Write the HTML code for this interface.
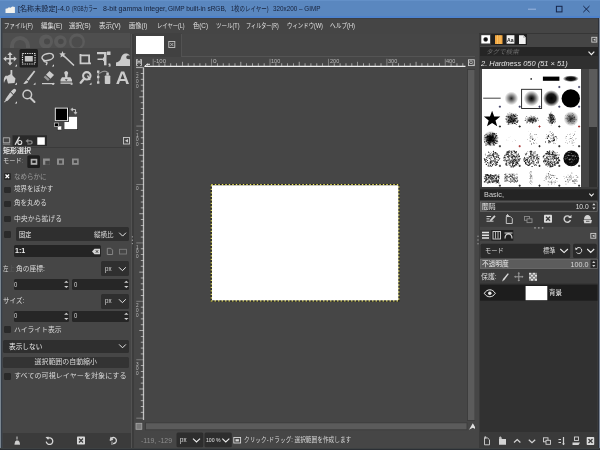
<!DOCTYPE html>
<html lang="ja">
<head>
<meta charset="utf-8">
<title>GIMP</title>
<style>
*{box-sizing:border-box;margin:0;padding:0}
html,body{width:600px;height:450px;overflow:hidden;background:#454545}
body{position:relative;font-family:"Liberation Sans","Noto Sans CJK JP",sans-serif;font-size:7px;color:#d8d8d8}
.a{position:absolute}
.t{position:absolute;white-space:nowrap;line-height:10px;height:10px}
.dk{position:absolute;background:#2f2f2f;border-radius:1.5px}
.cb{position:absolute;width:6.600px;height:6.600px;background:#2a2a2a;border-radius:1.2px}
svg{position:absolute;overflow:visible}
</style>
</head>
<body>
<div id="root" style="position:absolute;left:0;top:0;width:600px;height:450px;will-change:transform">
<div class="a" style="left:0;top:0;width:600px;height:18px;background:#5a87bf"></div>
<div class="a" style="left:0;top:0;width:600px;height:1px;background:#6390c8"></div>
<div class="a" style="left:0;top:16px;width:600px;height:2px;background:#4e82cb"></div>
<svg style="left:4.500px;top:6px" width="11" height="8" viewBox="0 0 11 8"><path d="M0.5 2.800 L2.800 2.300 L3.800 1.200 L5.500 1.800 L7.300 0.500 L9.900 0.900 L9.900 7 L0.5 7Z" fill="#f2f2ee"/></svg>
<div class="t" style="left:17.60px;top:4.30px;font-size:7.2px;color:#16213a;transform:scaleX(0.9899);transform-origin:0 50%;">[名称未設定]-4.0</div>
<div class="t" style="left:72.20px;top:4.30px;font-size:7.2px;color:#16213a;transform:scaleX(0.6448);transform-origin:0 50%;">(RGBカラー</div>
<div class="t" style="left:103.40px;top:4.30px;font-size:7.2px;color:#16213a;transform:scaleX(0.9766);transform-origin:0 50%;">8-bit gamma integer,</div>
<div class="t" style="left:168.40px;top:4.30px;font-size:7.2px;color:#16213a;transform:scaleX(0.9074);transform-origin:0 50%;">GIMP built-in sRGB,</div>
<div class="t" style="left:230.70px;top:4.30px;font-size:7.2px;color:#16213a;transform:scaleX(0.7645);transform-origin:0 50%;">1枚のレイヤー)</div>
<div class="t" style="left:273.00px;top:4.30px;font-size:7.2px;color:#16213a;transform:scaleX(0.8785);transform-origin:0 50%;">320x200 – GIMP</div>
<svg style="left:526px;top:3px" width="70" height="12" viewBox="0 0 70 12"><path d="M2 6.2h8" stroke="#9ab6de" stroke-width="1"/><rect x="30.4" y="3.3" width="5.600" height="5.600" fill="none" stroke="#15254a" stroke-width="1"/><path d="M57.3 3l6.200 6.200M63.500 3l-6.200 6.200" stroke="#15254a" stroke-width="1"/></svg>
<div class="a" style="left:1px;top:18px;width:598px;height:16px;background:#454545"></div>
<div class="a" style="left:0;top:18px;width:600px;height:1px;background:#3c3e44"></div>
<div class="t" style="left:4.20px;top:20.80px;font-size:6.6px;color:#e0e0e0;transform:scaleX(0.8277);transform-origin:0 50%;">ファイル(F)</div>
<div class="t" style="left:40.50px;top:20.80px;font-size:6.6px;color:#e0e0e0;transform:scaleX(0.9689);transform-origin:0 50%;">編集(E)</div>
<div class="t" style="left:69.40px;top:20.80px;font-size:6.6px;color:#e0e0e0;transform:scaleX(0.9916);transform-origin:0 50%;">選択(S)</div>
<div class="t" style="left:98.60px;top:20.80px;font-size:6.6px;color:#e0e0e0;transform:scaleX(0.9916);transform-origin:0 50%;">表示(V)</div>
<div class="t" style="left:128.90px;top:20.80px;font-size:6.6px;color:#e0e0e0;transform:scaleX(0.9474);transform-origin:0 50%;">画像(I)</div>
<div class="t" style="left:157.00px;top:20.80px;font-size:6.6px;color:#e0e0e0;transform:scaleX(0.8058);transform-origin:0 50%;">レイヤー(L)</div>
<div class="t" style="left:192.50px;top:20.80px;font-size:6.6px;color:#e0e0e0;transform:scaleX(0.9524);transform-origin:0 50%;">色(C)</div>
<div class="t" style="left:215.70px;top:20.80px;font-size:6.6px;color:#e0e0e0;transform:scaleX(0.8332);transform-origin:0 50%;">ツール(T)</div>
<div class="t" style="left:246.30px;top:20.80px;font-size:6.6px;color:#e0e0e0;transform:scaleX(0.7762);transform-origin:0 50%;">フィルター(R)</div>
<div class="t" style="left:286.60px;top:20.80px;font-size:6.6px;color:#e0e0e0;transform:scaleX(0.8212);transform-origin:0 50%;">ウィンドウ(W)</div>
<div class="t" style="left:330.00px;top:20.80px;font-size:6.6px;color:#e0e0e0;transform:scaleX(0.8639);transform-origin:0 50%;">ヘルプ(H)</div>
<div class="a" style="left:1px;top:34px;width:129.500px;height:414px;background:#464646"></div>
<div class="a" style="left:1.500px;top:33px;width:128px;height:15px;background:#4e4e4e"></div>
<svg style="left:0;top:0" width="600" height="450" viewBox="0 0 600 450">
<defs><clipPath id="wb"><rect x="1.500" y="33" width="128" height="15"/></clipPath></defs><g clip-path="url(#wb)">
<g fill="none" stroke="#5b5b5b" stroke-width="4"><path d="M12 48v-2a8 8 0 0 1 16 0v2"/></g>
<g fill="#5b5b5b"><circle cx="46" cy="41.500" r="7"/><circle cx="60.300" cy="41.500" r="6.300"/><circle cx="77" cy="41.500" r="8"/></g>
<g fill="#494949"><circle cx="47" cy="41.500" r="3"/><circle cx="60.800" cy="41.500" r="2.800"/><circle cx="77" cy="42" r="5.500" fill="#4c4c4c"/></g></g>
<rect x="19.5" y="49" width="18.5" height="18.5" rx="1.5" fill="#1f1f1f"/>
<g fill="#cbcbcb"><path d="M10 52l2.6 3h-1.8v3h3v-1.8l3 2.6-3 2.6v-1.8h-3v3h1.8l-2.6 3-2.6-3h1.8v-3h-3v1.8l-3-2.6 3-2.6v1.800h3v-3h-1.800z"/></g>
<rect x="22.5" y="53.5" width="12.5" height="10.5" fill="none" stroke="#e4e4e4" stroke-width="1.2" stroke-dasharray="1.3 1"/>
<rect x="24.8" y="56" width="8" height="5.5" fill="#c4c4c4"/>
<g fill="none" stroke="#cbcbcb" stroke-width="1.5"><ellipse cx="47.7" cy="57" rx="5.8" ry="3.4" transform="rotate(-12 47.7 57)"/><path d="M43.5 59.5c-.5 2 1.500 2.500 2.500 2.500s1.500 1.500 0 3"/></g>
<g stroke="#cbcbcb" stroke-width="1.7" stroke-linecap="round"><path d="M64 56l9.500 9"/></g><path d="M62.500 51l.9 2.200 2.300.3-1.700 1.600.5 2.400-2-1.200-2.100 1.200.5-2.400-1.700-1.600 2.400-.3z" fill="#cbcbcb"/>
<g fill="none" stroke="#cbcbcb" stroke-width="1.8"><path d="M80.500 54v9.300h10.500M79.500 55.300h9.600v9"/></g>
<g fill="#cbcbcb"><rect x="97" y="52" width="8.500" height="2.200"/><rect x="107" y="51.500" width="3.500" height="3.500"/><path d="M104 52h2.500v13.300h-2.500z"/><path d="M97.500 58.500h5.500v-1.500l2.500 2.300-2.500 2.300v-1.500h-5.500z"/><rect x="108.500" y="63.500" width="1.800" height="1.800"/></g>
<path d="M116 66v-3.500c2.500-.5 4.500-2 5-4.500.6-3 3.200-5.200 6-4.400 1.600.4 2.300 1.300 2.800 2.300-1.500-.6-3.200-.3-3.500 1.100-.3 1.700 1.400 2.500 3.700 2.200v6.800z" fill="#cbcbcb"/>
<path d="M17.0 66.5l0-2.200-2.200 2.200z" fill="#d8d8d8"/>
<path d="M54.0 66.5l0-2.200-2.200 2.200z" fill="#d8d8d8"/>
<path d="M110.5 66.5l0-2.200-2.200 2.200z" fill="#d8d8d8"/>
<path d="M17.0 84.8l0-2.200-2.200 2.200z" fill="#d8d8d8"/>
<path d="M35.5 84.8l0-2.200-2.200 2.200z" fill="#d8d8d8"/>
<path d="M54.0 84.8l0-2.200-2.200 2.200z" fill="#d8d8d8"/>
<path d="M72.5 84.8l0-2.200-2.200 2.200z" fill="#d8d8d8"/>
<path d="M91.5 84.8l0-2.200-2.200 2.200z" fill="#d8d8d8"/>
<path d="M17.0 103.5l0-2.200-2.200 2.200z" fill="#d8d8d8"/>
<g fill="#cbcbcb"><path d="M10.500 70h1.800v6h-1.800z"/><path d="M6 76.500l5-2.500 4.500 4.500-1 4.500-6.500.5z"/><path d="M6.500 75.500c-2.500.5-3 4-2.500 7.500.8-2.500 1.500-4 3.500-5z"/></g>
<g fill="#cbcbcb"><path d="M34 70.500l1.300 1-6.800 9.300-1.800-1.300z"/><path d="M26.300 80.300l2 1.500c-.8 1.800-3 2.500-5.300 2 1.300-.5 1.800-2.200 3.300-3.500z"/></g>
<g fill="#cbcbcb"><path d="M49.500 71l4.500 4-3.500 3.800-4.500-4z"/><path d="M45.300 75.500l4.300 3.900-1.600 1.700-4.300-3.900z" opacity=".6"/><path d="M42 83h12.500v1.200h-12.500z"/></g>
<g fill="#cbcbcb"><path d="M65 71.500a2 2 0 0 1 2.800 2.800l-.5 3h3.200l1.500 2.500v1.700h-11.500v-1.700l1.500-2.500h3.200l-.5-3a2 2 0 0 1 .3-2.800z"/><rect x="60.500" y="82.500" width="11.500" height="1.300"/></g>
<path d="M64.800 79.300h3l-1.500 1.800z" fill="#464646"/>
<circle cx="86.800" cy="75.800" r="3.700" fill="none" stroke="#cbcbcb" stroke-width="2.100"/><path d="M84.300 78.500l-3.600 4.200" stroke="#cbcbcb" stroke-width="2.400" stroke-linecap="round"/><path d="M87.500 75.500l2.500 4.500" stroke="#cbcbcb" stroke-width="1.500"/>
<g fill="#cbcbcb"><rect x="97" y="70.500" width="2.400" height="2.400"/><rect x="97" y="75.800" width="2.400" height="2.400"/><rect x="97" y="81.300" width="2.400" height="2.400"/><rect x="104.800" y="75.500" width="5.500" height="8.500" rx=".8"/><rect x="106.300" y="72.500" width="2.500" height="3"/></g><path d="M98.200 71v12M99.500 73.500c3-2.500 5.500-2.800 8-1.500" fill="none" stroke="#cbcbcb" stroke-width=".8"/>
<path d="M121 71.500h3.200l4.800 12.500h-2.700l-1-2.900h-5.400l-1 2.900h-2.700zm1.600 2.300l-2 5.300h4z" fill="#cbcbcb"/>
<g fill="#cbcbcb"><path d="M13.300 89.200a1.700 1.700 0 0 1 2.400 2.400l-2.200 2.600-2.600-2.600z"/><path d="M10.300 92.200l2.800 2.800-5.500 5.800-1.800.5-1 1.300-.8-.8 1.200-1.100.4-1.700z"/></g>
<g fill="none" stroke="#cbcbcb"><circle cx="27.300" cy="94.500" r="4.300" stroke-width="1.500"/><path d="M30.500 98l4 4" stroke-width="2" stroke-linecap="round"/></g>
<rect x="64.400" y="116.800" width="13.600" height="13.200" fill="#222"/><rect x="64.400" y="116.800" width="12.800" height="12.400" fill="#fff"/>
<rect x="54.800" y="107.600" width="14" height="14.400" fill="#1a1a1a"/><rect x="55.300" y="108.100" width="12.200" height="12.600" fill="#000" stroke="#e6e6e6" stroke-width="1"/>
<rect x="57.400" y="126" width="4.300" height="4" fill="#fff" stroke="#222" stroke-width=".5"/><rect x="54.600" y="123" width="4" height="3.500" fill="#000" stroke="#ccc" stroke-width=".7"/>
<path d="M71.500 109.500h4v4M70.800 109.500l1.800-1.300v2.600zM75.500 114.200l-1.300-1.800h2.600z" fill="none" stroke="#cbcbcb" stroke-width=".9"/>
</svg>
<div class="a" style="left:1px;top:146.500px;width:129.500px;height:1px;background:#3a3a3a"></div>
<svg style="left:0;top:0" width="600" height="450" viewBox="0 0 600 450">
<rect x="12.500" y="135.300" width="34.500" height="10.700" fill="#2a2a2a"/>
<path d="M3.200 137.800h6.500v5h-6.500z" fill="none" stroke="#b8b8b8" stroke-width=".9"/><path d="M2.700 144.200h7.500" stroke="#a0a0a0" stroke-width=".7"/>
<path d="M14.500 144.500l4.300-8 1.200.6-4.300 8z" fill="#e0e0e0"/><circle cx="19.800" cy="142.500" r="2" fill="none" stroke="#e0e0e0" stroke-width="1.100"/>
<path d="M25.500 141l2.800-2.300v1.600h2.300a2.100 2.100 0 0 1 0 4.300h-3.300v-1.100h3.100a1 1 0 0 0 0-2h-2.100v1.800z" fill="#8a8a8a"/>
<rect x="37.300" y="137.300" width="7.500" height="7.500" fill="#fff"/>
<rect x="123.500" y="137.500" width="6" height="6.500" fill="none" stroke="#cbcbcb" stroke-width=".9"/><path d="M128 139l-3 1.800 3 1.800z" fill="#cbcbcb"/>
<rect x="27.300" y="155.300" width="12.700" height="12.700" rx="1.500" fill="#1e1e1e"/>
<g fill="#8e8e8e"><rect x="30.700" y="158.800" width="6.600" height="6" fill="#b0b0b0"/><rect x="43" y="158.500" width="6.800" height="6.300"/><rect x="57" y="158.500" width="7" height="6.300"/><rect x="72" y="158.500" width="6.700" height="6.300"/></g>
<g fill="#464646"><rect x="45.300" y="160.800" width="4.500" height="4"/><rect x="59" y="160.300" width="3.200" height="3.200"/><rect x="73.800" y="160.300" width="3.300" height="2.700"/></g><rect x="32.300" y="160.500" width="3.400" height="2.400" fill="#1e1e1e"/>
</svg>
<div class="t" style="left:2.70px;top:146.20px;font-size:6.4px;color:#e6e6e6;transform:scaleX(1.0954);transform-origin:0 50%;font-weight:bold">矩形選択</div>
<div class="t" style="left:2.70px;top:156.30px;font-size:6.4px;color:#dadada;transform:scaleX(0.9702);transform-origin:0 50%;">モード</div>
<div class="t" style="left:22.00px;top:156.30px;font-size:6.4px;color:#8a8a8a;transform:scaleX(0.8421);transform-origin:0 50%;">:</div>
<div class="cb" style="left:4.2px;top:173.2px"></div><svg style="left:4.2px;top:173.2px" width="6.600" height="6.600" viewBox="0 0 6.600 6.600"><path d="M1.500 1.500l3.600 3.600M5.100 1.500l-3.600 3.600" stroke="#fff" stroke-width="1.300"/></svg>
<div class="t" style="left:14.40px;top:171.80px;font-size:6.4px;color:#9c9c9c;transform:scaleX(1.0202);transform-origin:0 50%;">なめらかに</div>
<div class="cb" style="left:4.2px;top:186.5px"></div>
<div class="t" style="left:14.20px;top:184.40px;font-size:6.4px;color:#dadada;transform:scaleX(1.0249);transform-origin:0 50%;">境界をぼかす</div>
<div class="cb" style="left:4.2px;top:200.9px"></div>
<div class="t" style="left:14.20px;top:198.30px;font-size:6.4px;color:#dadada;transform:scaleX(1.0265);transform-origin:0 50%;">角を丸める</div>
<div class="cb" style="left:4.2px;top:215.9px"></div>
<div class="t" style="left:14.00px;top:214.30px;font-size:6.4px;color:#dadada;transform:scaleX(1.0730);transform-origin:0 50%;">中央から拡げる</div>
<div class="cb" style="left:4.2px;top:231.2px"></div>
<div class="dk" style="left:16px;top:227px;width:113.300px;height:14.300px"></div>
<div class="t" style="left:18.70px;top:229.50px;font-size:6.4px;color:#eeeeee;transform:scaleX(0.9623);transform-origin:0 50%;">固定</div>
<div class="t" style="left:93.50px;top:229.50px;font-size:6.4px;color:#dadada;transform:scaleX(1.0171);transform-origin:0 50%;">縦横比</div>
<div class="dk" style="left:13.900px;top:245.200px;width:87.300px;height:11.800px;background:#242424"></div>
<div class="t" style="left:14.90px;top:246.30px;font-size:6.8px;color:#f0f0f0;transform:scaleX(1.0480);transform-origin:0 50%;font-weight:bold">1:1</div>
<div class="t" style="left:2.70px;top:263.80px;font-size:6.4px;color:#dadada;transform:scaleX(0.8606);transform-origin:0 50%;">左</div>
<div class="t" style="left:9.30px;top:263.80px;font-size:6.4px;color:#5c5c5c;transform:scaleX(0.8606);transform-origin:0 50%;">上</div>
<div class="t" style="left:16.00px;top:263.80px;font-size:6.4px;color:#dadada;transform:scaleX(1.0606);transform-origin:0 50%;">角の座標:</div>
<div class="dk" style="left:100.700px;top:261.300px;width:28.600px;height:14.700px"></div>
<div class="t" style="left:104.70px;top:264.20px;font-size:6.8px;color:#dadada;transform:scaleX(0.9183);transform-origin:0 50%;">px</div>
<div class="dk" style="left:13.900px;top:278.800px;width:55.400px;height:11.300px;background:#262626"></div>
<div class="dk" style="left:71.700px;top:278.800px;width:57.600px;height:11.300px;background:#262626"></div>
<div class="t" style="left:14.40px;top:279.60px;font-size:6.4px;color:#dadada;transform:scaleX(0.9263);transform-origin:0 50%;">0</div>
<div class="t" style="left:74.00px;top:279.60px;font-size:6.4px;color:#dadada;transform:scaleX(0.9263);transform-origin:0 50%;">0</div>
<div class="t" style="left:3.20px;top:295.60px;font-size:6.4px;color:#dadada;transform:scaleX(1.0257);transform-origin:0 50%;">サイズ:</div>
<div class="dk" style="left:100.700px;top:294px;width:28.600px;height:14.700px"></div>
<div class="t" style="left:104.70px;top:296.40px;font-size:6.8px;color:#dadada;transform:scaleX(0.9183);transform-origin:0 50%;">px</div>
<div class="dk" style="left:13.900px;top:310.800px;width:55.400px;height:11.200px;background:#262626"></div>
<div class="dk" style="left:71.700px;top:310.800px;width:57.600px;height:11.200px;background:#262626"></div>
<div class="t" style="left:14.40px;top:311.20px;font-size:6.4px;color:#dadada;transform:scaleX(0.9263);transform-origin:0 50%;">0</div>
<div class="t" style="left:74.00px;top:311.20px;font-size:6.4px;color:#dadada;transform:scaleX(0.9263);transform-origin:0 50%;">0</div>
<div class="cb" style="left:4.2px;top:326.4px"></div>
<div class="t" style="left:14.40px;top:325.00px;font-size:6.4px;color:#dadada;transform:scaleX(1.0670);transform-origin:0 50%;">ハイライト表示</div>
<div class="dk" style="left:2.500px;top:339.600px;width:126.800px;height:13.700px"></div>
<div class="t" style="left:8.70px;top:341.50px;font-size:6.4px;color:#eeeeee;transform:scaleX(1.0422);transform-origin:0 50%;">表示しない</div>
<div class="dk" style="left:2.500px;top:356.700px;width:126.800px;height:11.300px;background:#333"></div>
<div class="t" style="left:37.24px;top:357.30px;font-size:6.4px;color:#dadada;transform:scaleX(1.0867);transform-origin:50% 50%;">選択範囲の自動縮小</div>
<div class="cb" style="left:4.2px;top:373px"></div>
<div class="t" style="left:14.00px;top:371.30px;font-size:6.4px;color:#dadada;transform:scaleX(1.1092);transform-origin:0 50%;">すべての可視レイヤーを対象にする</div>
<svg style="left:0;top:0" width="600" height="450" viewBox="0 0 600 450">
<path d="M119.20 232.70l3.40 3.40l3.40 -3.40" fill="none" stroke="#e8e8e8" stroke-width="1.0"/>
<path d="M119.00 267.30l3.40 3.40l3.40 -3.40" fill="none" stroke="#e8e8e8" stroke-width="1.0"/>
<path d="M119.00 299.30l3.40 3.40l3.40 -3.40" fill="none" stroke="#e8e8e8" stroke-width="1.0"/>
<path d="M119.10 344.40l3.40 3.40l3.40 -3.40" fill="none" stroke="#e8e8e8" stroke-width="1.0"/>
<path d="M92 251.500l2.500-2.700h5.500v5.400h-5.500z" fill="#d5d5d5"/><path d="M95.800 250.200l2.400 2.600M98.200 250.200l-2.400 2.600" stroke="#242424" stroke-width=".8"/>
<path d="M107.300 248.300h3.500l1.800 1.800v4.400h-5.300z" fill="none" stroke="#8c8c8c" stroke-width=".9"/><rect x="119.500" y="249.300" width="7" height="4.700" fill="none" stroke="#7c7c7c" stroke-width=".9"/>
<path d="M64.1 282.7l2.200-2 2.200 2zM64.1 286.1l2.200 2 2.200-2z" fill="#d0d0d0"/>
<path d="M124.1 282.7l2.200-2 2.200 2zM124.1 286.1l2.200 2 2.200-2z" fill="#d0d0d0"/>
<path d="M64.1 314.7l2.200-2 2.200 2zM64.1 318.1l2.200 2 2.200-2z" fill="#d0d0d0"/>
<path d="M124.1 314.7l2.200-2 2.200 2zM124.1 318.1l2.200 2 2.200-2z" fill="#d0d0d0"/>
</svg>
<div class="a" style="left:1px;top:432.500px;width:129.500px;height:15.500px;background:#3b3b3b"></div>
<svg style="left:0;top:0" width="600" height="450" viewBox="0 0 600 450">
<path d="M17 436.500v3M15 443.500h4.500l-1-2.500h-2.500zM14.500 444.200h5.500" fill="#cfcfcf" stroke="#cfcfcf" stroke-width="1"/>
<path d="M47.500 438.500a3.300 3.300 0 1 1-1.300 3.200" fill="none" stroke="#d5d5d5" stroke-width="1.300"/><path d="M45.500 437l3.300-.3-.6 3.200z" fill="#d5d5d5"/>
<rect x="77" y="436.500" width="8" height="8" rx=".8" fill="#d8d8d8"/><path d="M79 438.500l4 4M83 438.500l-4 4" stroke="#3b3b3b" stroke-width="1.300"/>
<path d="M111.500 438.200a3 3 0 1 1 1.500 5.300" fill="none" stroke="#d5d5d5" stroke-width="1.300"/><path d="M110 440.500l.8-3.200 2.300 2.200zM112 441.500v3.500" fill="#d5d5d5" stroke="#d5d5d5" stroke-width=".8"/>
</svg>
<div class="a" style="left:130.500px;top:34px;width:3.500px;height:414px;background:#3c3c3c"></div>
<div class="a" style="left:131.200px;top:34px;width:.8px;height:414px;background:#525252"></div>
<svg style="left:0;top:0" width="600" height="450" viewBox="0 0 600 450"><g fill="#b0b0b0"><circle cx="132.400" cy="236.800" r=".6"/><circle cx="132.400" cy="240.200" r=".6"/><circle cx="132.400" cy="243.600" r=".6"/></g></svg>
<div class="a" style="left:134px;top:34px;width:345px;height:414px;background:#464646"></div>
<div class="a" style="left:134px;top:33px;width:47.500px;height:24px;background:#414141"></div>
<div class="a" style="left:181px;top:34px;width:294px;height:22.500px;border-left:1px solid #525252;border-bottom:1px solid #545454"></div>
<div class="a" style="left:136px;top:36px;width:28px;height:18px;background:#fff"></div>
<div class="a" style="left:134px;top:57px;width:341px;height:391px;background:#464646"></div>
<svg style="left:0;top:0" width="600" height="450" viewBox="0 0 600 450">
<rect x="168.800" y="41.500" width="6" height="6" fill="none" stroke="#c4c4c4" stroke-width=".9"/><path d="M170.300 43l3 3M173.300 43l-3 3" stroke="#c4c4c4" stroke-width=".8"/>
<path d="M144.500 66.300h321" stroke="#f0f0f0" stroke-width="1.300"/>
<path d="M147.34 66.300v-3.0" stroke="#dedede" stroke-width=".7" opacity="0.9"/>
<path d="M153.18 66.300v-7.5" stroke="#dedede" stroke-width=".7" opacity="0.6"/>
<path d="M159.02 66.300v-3.0" stroke="#dedede" stroke-width=".7" opacity="0.9"/>
<path d="M164.86 66.300v-3.0" stroke="#dedede" stroke-width=".7" opacity="0.9"/>
<path d="M170.71 66.300v-3.0" stroke="#dedede" stroke-width=".7" opacity="0.9"/>
<path d="M176.55 66.300v-3.0" stroke="#dedede" stroke-width=".7" opacity="0.9"/>
<path d="M182.39 66.300v-4.5" stroke="#dedede" stroke-width=".7" opacity="0.9"/>
<path d="M188.23 66.300v-3.0" stroke="#dedede" stroke-width=".7" opacity="0.9"/>
<path d="M194.07 66.300v-3.0" stroke="#dedede" stroke-width=".7" opacity="0.9"/>
<path d="M199.92 66.300v-3.0" stroke="#dedede" stroke-width=".7" opacity="0.9"/>
<path d="M205.76 66.300v-3.0" stroke="#dedede" stroke-width=".7" opacity="0.9"/>
<path d="M211.60 66.300v-7.5" stroke="#dedede" stroke-width=".7" opacity="0.6"/>
<path d="M217.44 66.300v-3.0" stroke="#dedede" stroke-width=".7" opacity="0.9"/>
<path d="M223.28 66.300v-3.0" stroke="#dedede" stroke-width=".7" opacity="0.9"/>
<path d="M229.13 66.300v-3.0" stroke="#dedede" stroke-width=".7" opacity="0.9"/>
<path d="M234.97 66.300v-3.0" stroke="#dedede" stroke-width=".7" opacity="0.9"/>
<path d="M240.81 66.300v-4.5" stroke="#dedede" stroke-width=".7" opacity="0.9"/>
<path d="M246.65 66.300v-3.0" stroke="#dedede" stroke-width=".7" opacity="0.9"/>
<path d="M252.49 66.300v-3.0" stroke="#dedede" stroke-width=".7" opacity="0.9"/>
<path d="M258.34 66.300v-3.0" stroke="#dedede" stroke-width=".7" opacity="0.9"/>
<path d="M264.18 66.300v-3.0" stroke="#dedede" stroke-width=".7" opacity="0.9"/>
<path d="M270.02 66.300v-7.5" stroke="#dedede" stroke-width=".7" opacity="0.6"/>
<path d="M275.86 66.300v-3.0" stroke="#dedede" stroke-width=".7" opacity="0.9"/>
<path d="M281.70 66.300v-3.0" stroke="#dedede" stroke-width=".7" opacity="0.9"/>
<path d="M287.55 66.300v-3.0" stroke="#dedede" stroke-width=".7" opacity="0.9"/>
<path d="M293.39 66.300v-3.0" stroke="#dedede" stroke-width=".7" opacity="0.9"/>
<path d="M299.23 66.300v-4.5" stroke="#dedede" stroke-width=".7" opacity="0.9"/>
<path d="M305.07 66.300v-3.0" stroke="#dedede" stroke-width=".7" opacity="0.9"/>
<path d="M310.91 66.300v-3.0" stroke="#dedede" stroke-width=".7" opacity="0.9"/>
<path d="M316.76 66.300v-3.0" stroke="#dedede" stroke-width=".7" opacity="0.9"/>
<path d="M322.60 66.300v-3.0" stroke="#dedede" stroke-width=".7" opacity="0.9"/>
<path d="M328.44 66.300v-7.5" stroke="#dedede" stroke-width=".7" opacity="0.6"/>
<path d="M334.28 66.300v-3.0" stroke="#dedede" stroke-width=".7" opacity="0.9"/>
<path d="M340.12 66.300v-3.0" stroke="#dedede" stroke-width=".7" opacity="0.9"/>
<path d="M345.97 66.300v-3.0" stroke="#dedede" stroke-width=".7" opacity="0.9"/>
<path d="M351.81 66.300v-3.0" stroke="#dedede" stroke-width=".7" opacity="0.9"/>
<path d="M357.65 66.300v-4.5" stroke="#dedede" stroke-width=".7" opacity="0.9"/>
<path d="M363.49 66.300v-3.0" stroke="#dedede" stroke-width=".7" opacity="0.9"/>
<path d="M369.33 66.300v-3.0" stroke="#dedede" stroke-width=".7" opacity="0.9"/>
<path d="M375.18 66.300v-3.0" stroke="#dedede" stroke-width=".7" opacity="0.9"/>
<path d="M381.02 66.300v-3.0" stroke="#dedede" stroke-width=".7" opacity="0.9"/>
<path d="M386.86 66.300v-7.5" stroke="#dedede" stroke-width=".7" opacity="0.6"/>
<path d="M392.70 66.300v-3.0" stroke="#dedede" stroke-width=".7" opacity="0.9"/>
<path d="M398.54 66.300v-3.0" stroke="#dedede" stroke-width=".7" opacity="0.9"/>
<path d="M404.39 66.300v-3.0" stroke="#dedede" stroke-width=".7" opacity="0.9"/>
<path d="M410.23 66.300v-3.0" stroke="#dedede" stroke-width=".7" opacity="0.9"/>
<path d="M416.07 66.300v-4.5" stroke="#dedede" stroke-width=".7" opacity="0.9"/>
<path d="M421.91 66.300v-3.0" stroke="#dedede" stroke-width=".7" opacity="0.9"/>
<path d="M427.75 66.300v-3.0" stroke="#dedede" stroke-width=".7" opacity="0.9"/>
<path d="M433.60 66.300v-3.0" stroke="#dedede" stroke-width=".7" opacity="0.9"/>
<path d="M439.44 66.300v-3.0" stroke="#dedede" stroke-width=".7" opacity="0.9"/>
<path d="M445.28 66.300v-7.5" stroke="#dedede" stroke-width=".7" opacity="0.6"/>
<path d="M451.12 66.300v-3.0" stroke="#dedede" stroke-width=".7" opacity="0.9"/>
<path d="M456.96 66.300v-3.0" stroke="#dedede" stroke-width=".7" opacity="0.9"/>
<path d="M462.81 66.300v-3.0" stroke="#dedede" stroke-width=".7" opacity="0.9"/>
<path d="M143.500 67.500v352.500" stroke="#c0c0c0" stroke-width="1.300"/>
<path d="M143.800 67.66h-7.5" stroke="#dedede" stroke-width=".75" opacity="0.5"/>
<path d="M143.800 73.50h-3.0" stroke="#dedede" stroke-width=".75" opacity="0.9"/>
<path d="M143.800 79.34h-3.0" stroke="#dedede" stroke-width=".75" opacity="0.9"/>
<path d="M143.800 85.19h-3.0" stroke="#dedede" stroke-width=".75" opacity="0.9"/>
<path d="M143.800 91.03h-3.0" stroke="#dedede" stroke-width=".75" opacity="0.9"/>
<path d="M143.800 96.87h-4.5" stroke="#dedede" stroke-width=".75" opacity="0.9"/>
<path d="M143.800 102.71h-3.0" stroke="#dedede" stroke-width=".75" opacity="0.9"/>
<path d="M143.800 108.55h-3.0" stroke="#dedede" stroke-width=".75" opacity="0.9"/>
<path d="M143.800 114.40h-3.0" stroke="#dedede" stroke-width=".75" opacity="0.9"/>
<path d="M143.800 120.24h-3.0" stroke="#dedede" stroke-width=".75" opacity="0.9"/>
<path d="M143.800 126.08h-7.5" stroke="#dedede" stroke-width=".75" opacity="0.5"/>
<path d="M143.800 131.92h-3.0" stroke="#dedede" stroke-width=".75" opacity="0.9"/>
<path d="M143.800 137.76h-3.0" stroke="#dedede" stroke-width=".75" opacity="0.9"/>
<path d="M143.800 143.61h-3.0" stroke="#dedede" stroke-width=".75" opacity="0.9"/>
<path d="M143.800 149.45h-3.0" stroke="#dedede" stroke-width=".75" opacity="0.9"/>
<path d="M143.800 155.29h-4.5" stroke="#dedede" stroke-width=".75" opacity="0.9"/>
<path d="M143.800 161.13h-3.0" stroke="#dedede" stroke-width=".75" opacity="0.9"/>
<path d="M143.800 166.97h-3.0" stroke="#dedede" stroke-width=".75" opacity="0.9"/>
<path d="M143.800 172.82h-3.0" stroke="#dedede" stroke-width=".75" opacity="0.9"/>
<path d="M143.800 178.66h-3.0" stroke="#dedede" stroke-width=".75" opacity="0.9"/>
<path d="M143.800 184.50h-7.5" stroke="#dedede" stroke-width=".75" opacity="0.5"/>
<path d="M143.800 190.34h-3.0" stroke="#dedede" stroke-width=".75" opacity="0.9"/>
<path d="M143.800 196.18h-3.0" stroke="#dedede" stroke-width=".75" opacity="0.9"/>
<path d="M143.800 202.03h-3.0" stroke="#dedede" stroke-width=".75" opacity="0.9"/>
<path d="M143.800 207.87h-3.0" stroke="#dedede" stroke-width=".75" opacity="0.9"/>
<path d="M143.800 213.71h-4.5" stroke="#dedede" stroke-width=".75" opacity="0.9"/>
<path d="M143.800 219.55h-3.0" stroke="#dedede" stroke-width=".75" opacity="0.9"/>
<path d="M143.800 225.39h-3.0" stroke="#dedede" stroke-width=".75" opacity="0.9"/>
<path d="M143.800 231.24h-3.0" stroke="#dedede" stroke-width=".75" opacity="0.9"/>
<path d="M143.800 237.08h-3.0" stroke="#dedede" stroke-width=".75" opacity="0.9"/>
<path d="M143.800 242.92h-7.5" stroke="#dedede" stroke-width=".75" opacity="0.5"/>
<path d="M143.800 248.76h-3.0" stroke="#dedede" stroke-width=".75" opacity="0.9"/>
<path d="M143.800 254.60h-3.0" stroke="#dedede" stroke-width=".75" opacity="0.9"/>
<path d="M143.800 260.45h-3.0" stroke="#dedede" stroke-width=".75" opacity="0.9"/>
<path d="M143.800 266.29h-3.0" stroke="#dedede" stroke-width=".75" opacity="0.9"/>
<path d="M143.800 272.13h-4.5" stroke="#dedede" stroke-width=".75" opacity="0.9"/>
<path d="M143.800 277.97h-3.0" stroke="#dedede" stroke-width=".75" opacity="0.9"/>
<path d="M143.800 283.81h-3.0" stroke="#dedede" stroke-width=".75" opacity="0.9"/>
<path d="M143.800 289.66h-3.0" stroke="#dedede" stroke-width=".75" opacity="0.9"/>
<path d="M143.800 295.50h-3.0" stroke="#dedede" stroke-width=".75" opacity="0.9"/>
<path d="M143.800 301.34h-7.5" stroke="#dedede" stroke-width=".75" opacity="0.5"/>
<path d="M143.800 307.18h-3.0" stroke="#dedede" stroke-width=".75" opacity="0.9"/>
<path d="M143.800 313.02h-3.0" stroke="#dedede" stroke-width=".75" opacity="0.9"/>
<path d="M143.800 318.87h-3.0" stroke="#dedede" stroke-width=".75" opacity="0.9"/>
<path d="M143.800 324.71h-3.0" stroke="#dedede" stroke-width=".75" opacity="0.9"/>
<path d="M143.800 330.55h-4.5" stroke="#dedede" stroke-width=".75" opacity="0.9"/>
<path d="M143.800 336.39h-3.0" stroke="#dedede" stroke-width=".75" opacity="0.9"/>
<path d="M143.800 342.23h-3.0" stroke="#dedede" stroke-width=".75" opacity="0.9"/>
<path d="M143.800 348.08h-3.0" stroke="#dedede" stroke-width=".75" opacity="0.9"/>
<path d="M143.800 353.92h-3.0" stroke="#dedede" stroke-width=".75" opacity="0.9"/>
<path d="M143.800 359.76h-7.5" stroke="#dedede" stroke-width=".75" opacity="0.5"/>
<path d="M143.800 365.60h-3.0" stroke="#dedede" stroke-width=".75" opacity="0.9"/>
<path d="M143.800 371.44h-3.0" stroke="#dedede" stroke-width=".75" opacity="0.9"/>
<path d="M143.800 377.29h-3.0" stroke="#dedede" stroke-width=".75" opacity="0.9"/>
<path d="M143.800 383.13h-3.0" stroke="#dedede" stroke-width=".75" opacity="0.9"/>
<path d="M143.800 388.97h-4.5" stroke="#dedede" stroke-width=".75" opacity="0.9"/>
<path d="M143.800 394.81h-3.0" stroke="#dedede" stroke-width=".75" opacity="0.9"/>
<path d="M143.800 400.65h-3.0" stroke="#dedede" stroke-width=".75" opacity="0.9"/>
<path d="M143.800 406.50h-3.0" stroke="#dedede" stroke-width=".75" opacity="0.9"/>
<path d="M143.800 412.34h-3.0" stroke="#dedede" stroke-width=".75" opacity="0.9"/>
<path d="M143.800 418.18h-7.5" stroke="#dedede" stroke-width=".75" opacity="0.5"/>
<path d="M137.800 59.500h-1.300v6h1.300M140.200 59.500h1.300v6h-1.300M137.800 64v-3.500l1.200 2 1.200-2v3.500" stroke="#d8d8d8" stroke-width=".8" fill="none"/><path d="M136 67.300h6.500" stroke="#cfcfcf" stroke-width=".8"/>
<path d="M144.700 66.300l2.300-2 3 0" stroke="#eee" stroke-width="1" fill="none"/>
<rect x="211.300" y="184.700" width="187.500" height="116.200" fill="none" stroke="#1c1c10" stroke-width="1.200"/>
<rect x="211.300" y="184.700" width="187.500" height="116.200" fill="none" stroke="#ece45a" stroke-width="1.200" stroke-dasharray="1.450 2.050"/>
<rect x="211.900" y="185.300" width="186.400" height="115" fill="#fff"/>
<rect x="468.500" y="59.800" width="5.800" height="5.800" fill="none" stroke="#cfcfcf" stroke-width=".9"/><circle cx="471" cy="62.300" r="1.400" fill="none" stroke="#cfcfcf" stroke-width=".7"/><path d="M472 63.400l1.300 1.300" stroke="#cfcfcf" stroke-width=".7"/>
<rect x="467.500" y="69.500" width="7.500" height="351" fill="#5b5b5b" stroke="#3a3a3a" stroke-width=".8"/>
<rect x="145.500" y="422.800" width="321.500" height="7" fill="#5b5b5b" stroke="#3a3a3a" stroke-width=".8"/>
<rect x="136" y="423.300" width="5.800" height="6" fill="#7a7a7a" stroke="#a8a8a8" stroke-width=".8"/>
<path d="M469 429.800l3.800-6.500 3.800 6.500-3.800-2z" fill="#e0e0e0"/>
<rect x="176.500" y="432.500" width="26.800" height="14.800" rx="1.500" fill="#2d2d2d"/><rect x="204.500" y="432.500" width="27.300" height="14.800" rx="1.500" fill="#2d2d2d"/>
<path d="M193 438.600l3.500 3.400 3.500-3.400M222.300 438.600l3.500 3.400 3.500-3.400" fill="none" stroke="#ececec" stroke-width="1.100"/>
<rect x="233.800" y="437.500" width="6.800" height="5.500" fill="none" stroke="#d8d8d8" stroke-width=".9"/><rect x="235.500" y="439.200" width="3.400" height="2.200" fill="#d8d8d8"/>
</svg>
<div class="t" style="left:154.40px;top:56.30px;font-size:5.5px;color:#bcbcbc;transform:scaleX(1.0894);transform-origin:0 50%;">-100</div>
<div class="t" style="left:212.80px;top:56.30px;font-size:5.5px;color:#bcbcbc;transform:scaleX(1.1755);transform-origin:0 50%;">0</div>
<div class="t" style="left:271.20px;top:56.30px;font-size:5.5px;color:#bcbcbc;transform:scaleX(1.0014);transform-origin:0 50%;">100</div>
<div class="t" style="left:329.60px;top:56.30px;font-size:5.5px;color:#bcbcbc;transform:scaleX(1.0014);transform-origin:0 50%;">200</div>
<div class="t" style="left:388.00px;top:56.30px;font-size:5.5px;color:#bcbcbc;transform:scaleX(1.0014);transform-origin:0 50%;">300</div>
<div class="t" style="left:446.40px;top:56.30px;font-size:5.5px;color:#bcbcbc;transform:scaleX(1.0014);transform-origin:0 50%;">400</div>
<div class="t" style="left:136.30px;top:66.50px;font-size:5.5px;color:#bcbcbc;transform:scaleX(1.4102);transform-origin:0 50%;">-</div>
<div class="t" style="left:136.30px;top:71.20px;font-size:5.5px;color:#bcbcbc;transform:scaleX(0.8490);transform-origin:0 50%;">2</div>
<div class="t" style="left:136.30px;top:75.90px;font-size:5.5px;color:#bcbcbc;transform:scaleX(0.8490);transform-origin:0 50%;">0</div>
<div class="t" style="left:136.30px;top:80.60px;font-size:5.5px;color:#bcbcbc;transform:scaleX(0.8490);transform-origin:0 50%;">0</div>
<div class="t" style="left:136.30px;top:124.90px;font-size:5.5px;color:#bcbcbc;transform:scaleX(1.4102);transform-origin:0 50%;">-</div>
<div class="t" style="left:136.30px;top:129.60px;font-size:5.5px;color:#bcbcbc;transform:scaleX(0.8490);transform-origin:0 50%;">1</div>
<div class="t" style="left:136.30px;top:134.30px;font-size:5.5px;color:#bcbcbc;transform:scaleX(0.8490);transform-origin:0 50%;">0</div>
<div class="t" style="left:136.30px;top:139.00px;font-size:5.5px;color:#bcbcbc;transform:scaleX(0.8490);transform-origin:0 50%;">0</div>
<div class="t" style="left:136.30px;top:183.30px;font-size:5.5px;color:#bcbcbc;transform:scaleX(0.8490);transform-origin:0 50%;">0</div>
<div class="t" style="left:136.30px;top:241.70px;font-size:5.5px;color:#bcbcbc;transform:scaleX(0.8490);transform-origin:0 50%;">1</div>
<div class="t" style="left:136.30px;top:246.40px;font-size:5.5px;color:#bcbcbc;transform:scaleX(0.8490);transform-origin:0 50%;">0</div>
<div class="t" style="left:136.30px;top:251.10px;font-size:5.5px;color:#bcbcbc;transform:scaleX(0.8490);transform-origin:0 50%;">0</div>
<div class="t" style="left:136.30px;top:300.10px;font-size:5.5px;color:#bcbcbc;transform:scaleX(0.8490);transform-origin:0 50%;">2</div>
<div class="t" style="left:136.30px;top:304.80px;font-size:5.5px;color:#bcbcbc;transform:scaleX(0.8490);transform-origin:0 50%;">0</div>
<div class="t" style="left:136.30px;top:309.50px;font-size:5.5px;color:#bcbcbc;transform:scaleX(0.8490);transform-origin:0 50%;">0</div>
<div class="t" style="left:136.30px;top:358.60px;font-size:5.5px;color:#bcbcbc;transform:scaleX(0.8490);transform-origin:0 50%;">3</div>
<div class="t" style="left:136.30px;top:363.30px;font-size:5.5px;color:#bcbcbc;transform:scaleX(0.8490);transform-origin:0 50%;">0</div>
<div class="t" style="left:136.30px;top:368.00px;font-size:5.5px;color:#bcbcbc;transform:scaleX(0.8490);transform-origin:0 50%;">0</div>
<div class="t" style="left:140.50px;top:435.50px;font-size:6.5px;color:#8e8e8e;transform:scaleX(1.0632);transform-origin:0 50%;">-119, -129</div>
<div class="t" style="left:180.00px;top:435.30px;font-size:6.5px;color:#e0e0e0;transform:scaleX(0.9455);transform-origin:0 50%;">px</div>
<div class="t" style="left:206.30px;top:435.30px;font-size:6px;color:#e0e0e0;transform:scaleX(0.8522);transform-origin:0 50%;">100 %</div>
<div class="t" style="left:243.70px;top:435.30px;font-size:6.4px;color:#d8d8d8;transform:scaleX(0.8888);transform-origin:0 50%;">クリック-ドラッグ: 選択範囲を作成します</div>
<div class="a" style="left:475px;top:34px;width:5px;height:414px;background:#464646"></div>
<div class="a" style="left:479px;top:34px;width:120px;height:414px;background:#454545"></div>
<div class="a" style="left:479px;top:34px;width:1px;height:414px;background:#3a3a3a"></div>
<div class="a" style="left:479px;top:33px;width:120px;height:1px;background:#363636"></div>
<div class="a" style="left:480px;top:34px;width:11.300px;height:11.500px;background:#383838"></div>
<div class="a" style="left:491.300px;top:34px;width:36px;height:11.300px;background:#202020"></div>
<div class="a" style="left:480px;top:47px;width:117.500px;height:9.300px;background:#252525"></div>
<div class="a" style="left:480px;top:56.300px;width:117.500px;height:12.400px;background:#303030"></div>
<div class="a" style="left:481.800px;top:68.700px;width:99.300px;height:118.500px;background:#fff"></div>
<div class="a" style="left:589.300px;top:69px;width:8.200px;height:118px;background:#2f2f2f"></div>
<div class="a" style="left:589.300px;top:69px;width:8.200px;height:58px;background:#5b5b5b"></div>
<div class="a" style="left:597.500px;top:47px;width:1.500px;height:140px;background:#2e2e2e"></div>
<svg style="left:0;top:0" width="600" height="450" viewBox="0 0 600 450">
<defs><radialGradient id="g1"><stop offset="0" stop-color="#000" stop-opacity=".85"/><stop offset=".35" stop-color="#000" stop-opacity=".55"/><stop offset="1" stop-color="#000" stop-opacity="0"/></radialGradient><radialGradient id="g2"><stop offset="0" stop-color="#000" stop-opacity="1"/><stop offset=".3" stop-color="#000" stop-opacity=".8"/><stop offset="1" stop-color="#000" stop-opacity="0"/></radialGradient><radialGradient id="g3"><stop offset="0" stop-color="#000" stop-opacity="1"/><stop offset=".55" stop-color="#000" stop-opacity=".9"/><stop offset="1" stop-color="#000" stop-opacity="0"/></radialGradient><radialGradient id="g4"><stop offset="0" stop-color="#fff" stop-opacity=".9"/><stop offset="1" stop-color="#fff" stop-opacity="0"/></radialGradient><clipPath id="gc"><rect x="482" y="68.500" width="99" height="118.500"/></clipPath></defs>
<rect x="481.300" y="35.200" width="8.800" height="8.300" fill="#fff"/><circle cx="485.700" cy="39.400" r="2.800" fill="url(#g3)"/>
<rect x="495" y="35.200" width="7.500" height="8.800" fill="#f2a742"/><path d="M497.500 35.200v8.800M500 35.200v8.800" stroke="#f7c66e" stroke-width=".8"/>
<rect x="506.600" y="35.200" width="7.800" height="8.500" fill="#f4f4f4"/>
<path d="M519 35.300h4.500l2.200 2.200v6.500h-6.700z" fill="#f2f2f2"/><path d="M523.500 35.300v2.200h2.200" fill="none" stroke="#aaa" stroke-width=".6"/>
<rect x="591.800" y="37.300" width="5" height="4.800" fill="none" stroke="#cfcfcf" stroke-width=".9"/><path d="M595.500 38.300l-2.400 1.400 2.400 1.400z" fill="#cfcfcf"/>
<path d="M588.500 51.700l2.900 3 2.900-3" fill="none" stroke="#eee" stroke-width="1.200"/>
<g clip-path="url(#gc)">
<circle cx="531.2" cy="78.9" r=".9" fill="#333"/>
<rect x="542.9" y="76.6" width="16.500" height="4.200" fill="#000"/>
<ellipse cx="570.8" cy="78.7" rx="8" ry="3.300" fill="url(#g3)"/>
<path d="M483.200 98.2h17.500" stroke="#111" stroke-width=".8"/>
<circle cx="511.4" cy="98.4" r="6.800" fill="url(#g1)"/>
<circle cx="531.5" cy="98.4" r="7.800" fill="url(#g2)"/>
<circle cx="551.3" cy="98.4" r="8.300" fill="url(#g3)"/>
<circle cx="570.8" cy="98.4" r="9.200" fill="#000"/>
<rect x="521.600" y="89.300" width="20" height="19.200" fill="none" stroke="#1a1a1a" stroke-width=".9"/>
<polygon points="492.1,110.7 494.2,116.4 500.3,116.6 495.5,120.4 497.2,126.2 492.1,122.9 487.0,126.2 488.7,120.4 483.9,116.6 490.0,116.4" fill="#000"/>
<ellipse cx="511.7" cy="118.7" rx="6.5" ry="6.5" fill="url(#g1)"/><path d="M510.6 120.8h0.3v0.3h-0.3zM509.4 118.1h0.7v0.7h-0.7zM514.3 119.3h0.3v0.3h-0.3zM508.3 120.4h0.4v0.4h-0.4zM507.7 114.5h0.6v0.6h-0.6zM513.2 118.5h0.5v0.5h-0.5zM512.7 120.0h0.9v0.9h-0.9zM513.7 122.9h0.6v0.6h-0.6zM510.7 118.4h0.4v0.4h-0.4zM510.3 115.8h0.7v0.7h-0.7zM508.2 119.7h0.8v0.8h-0.8zM511.9 123.0h1.0v1.0h-1.0zM511.2 114.7h0.4v0.4h-0.4zM508.4 120.5h0.7v0.7h-0.7zM516.9 120.0h0.7v0.7h-0.7zM514.2 116.2h0.8v0.8h-0.8zM507.6 116.4h1.1v1.1h-1.1zM508.5 119.2h0.8v0.8h-0.8zM507.6 113.2h0.5v0.5h-0.5zM509.3 120.7h0.6v0.6h-0.6zM512.4 119.9h0.9v0.9h-0.9zM513.5 120.6h1.0v1.0h-1.0zM515.1 120.6h1.0v1.0h-1.0zM513.6 114.6h0.6v0.6h-0.6zM507.3 124.0h0.4v0.4h-0.4zM512.7 120.7h0.7v0.7h-0.7zM510.1 117.6h0.6v0.6h-0.6zM507.9 122.7h0.8v0.8h-0.8zM506.8 118.2h0.3v0.3h-0.3zM516.7 115.0h0.9v0.9h-0.9zM509.7 120.3h0.8v0.8h-0.8zM512.8 119.1h0.4v0.4h-0.4zM511.2 119.4h0.4v0.4h-0.4zM513.6 120.1h1.0v1.0h-1.0zM510.3 117.5h0.5v0.5h-0.5zM510.1 120.5h1.1v1.1h-1.1zM508.9 119.3h0.3v0.3h-0.3zM509.8 121.6h0.4v0.4h-0.4zM517.2 119.5h0.4v0.4h-0.4zM510.8 118.4h1.1v1.1h-1.1zM514.3 115.7h0.6v0.6h-0.6zM514.2 123.1h0.9v0.9h-0.9zM510.2 121.5h1.1v1.1h-1.1zM515.4 113.8h0.9v0.9h-0.9zM512.2 122.3h0.3v0.3h-0.3zM514.2 119.1h0.8v0.8h-0.8zM516.4 117.4h1.1v1.1h-1.1zM514.4 117.9h0.4v0.4h-0.4zM512.6 121.3h1.0v1.0h-1.0zM514.0 115.1h0.9v0.9h-0.9zM516.7 121.6h0.9v0.9h-0.9zM511.7 115.6h0.9v0.9h-0.9zM508.4 124.4h0.6v0.6h-0.6zM506.6 122.3h0.4v0.4h-0.4zM513.6 120.7h0.9v0.9h-0.9zM515.8 124.0h0.8v0.8h-0.8zM509.8 121.2h0.3v0.3h-0.3zM516.2 117.8h1.0v1.0h-1.0zM505.9 121.3h0.4v0.4h-0.4zM511.7 121.2h0.7v0.7h-0.7zM511.5 121.4h1.0v1.0h-1.0zM509.3 121.9h1.0v1.0h-1.0zM507.0 121.3h0.7v0.7h-0.7zM511.0 118.6h0.4v0.4h-0.4zM515.6 118.8h0.7v0.7h-0.7zM511.1 115.0h0.7v0.7h-0.7zM508.2 117.4h0.7v0.7h-0.7zM511.7 122.2h0.7v0.7h-0.7zM505.9 116.3h0.6v0.6h-0.6zM508.6 116.1h0.8v0.8h-0.8zM507.8 119.9h1.1v1.1h-1.1zM509.6 112.2h0.5v0.5h-0.5zM505.5 116.2h0.4v0.4h-0.4zM513.6 120.5h0.5v0.5h-0.5zM516.6 121.1h1.0v1.0h-1.0zM514.7 123.0h0.4v0.4h-0.4zM515.0 115.7h1.1v1.1h-1.1zM507.5 121.8h1.0v1.0h-1.0zM513.7 121.8h0.5v0.5h-0.5zM512.9 122.1h0.3v0.3h-0.3zM509.3 117.8h0.5v0.5h-0.5zM509.7 116.7h1.1v1.1h-1.1zM512.7 114.7h0.5v0.5h-0.5zM515.8 119.7h0.4v0.4h-0.4zM505.9 121.7h0.5v0.5h-0.5zM515.0 123.2h0.8v0.8h-0.8zM513.0 119.5h0.6v0.6h-0.6zM517.0 121.3h0.9v0.9h-0.9zM514.9 120.5h1.0v1.0h-1.0zM508.5 119.6h1.0v1.0h-1.0zM511.5 120.7h0.5v0.5h-0.5zM512.9 119.7h0.4v0.4h-0.4zM510.3 122.0h0.5v0.5h-0.5zM509.6 118.7h0.3v0.3h-0.3zM511.7 119.5h0.7v0.7h-0.7zM513.6 123.3h0.3v0.3h-0.3zM513.2 115.3h1.0v1.0h-1.0zM508.2 121.5h1.1v1.1h-1.1zM508.5 123.6h0.8v0.8h-0.8zM509.8 120.0h0.4v0.4h-0.4zM515.4 120.4h0.4v0.4h-0.4zM517.2 121.9h0.8v0.8h-0.8zM511.2 121.0h0.6v0.6h-0.6zM513.4 121.3h1.1v1.1h-1.1zM515.1 118.1h1.1v1.1h-1.1zM510.9 120.8h0.6v0.6h-0.6zM508.5 119.2h0.7v0.7h-0.7zM513.8 118.7h0.6v0.6h-0.6zM512.4 118.9h0.4v0.4h-0.4zM507.6 116.2h0.8v0.8h-0.8zM510.7 113.9h0.5v0.5h-0.5zM514.2 118.4h0.8v0.8h-0.8zM517.9 120.4h0.8v0.8h-0.8zM511.3 114.8h0.7v0.7h-0.7zM505.5 118.5h1.0v1.0h-1.0zM506.5 115.7h0.8v0.8h-0.8zM511.8 119.4h0.6v0.6h-0.6zM515.9 121.9h0.8v0.8h-0.8zM508.5 115.4h0.3v0.3h-0.3zM513.1 114.0h0.7v0.7h-0.7zM510.8 117.3h0.5v0.5h-0.5zM514.7 120.2h0.4v0.4h-0.4zM511.3 113.2h0.6v0.6h-0.6zM506.3 119.4h0.8v0.8h-0.8zM511.0 117.7h0.5v0.5h-0.5zM511.6 115.4h0.3v0.3h-0.3zM514.7 119.9h0.8v0.8h-0.8zM510.3 115.9h0.6v0.6h-0.6zM509.3 119.2h0.4v0.4h-0.4zM515.4 118.2h0.6v0.6h-0.6z" fill="#000" opacity="0.9"/>
<ellipse cx="531.5" cy="119.4" rx="6.2" ry="3.5" fill="url(#g1)"/><path d="M534.0 116.4h0.5v0.5h-0.5zM532.7 122.0h0.7v0.7h-0.7zM535.1 121.9h0.3v0.3h-0.3zM533.8 116.6h0.8v0.8h-0.8zM532.2 122.6h0.3v0.3h-0.3zM535.6 119.4h0.5v0.5h-0.5zM533.5 120.7h0.9v0.9h-0.9zM538.0 119.4h0.3v0.3h-0.3zM537.3 117.7h0.5v0.5h-0.5zM528.0 121.4h0.7v0.7h-0.7zM529.3 120.8h0.3v0.3h-0.3zM535.3 121.0h1.0v1.0h-1.0zM531.5 121.1h0.4v0.4h-0.4zM526.3 122.4h0.9v0.9h-0.9zM526.4 116.3h0.7v0.7h-0.7zM531.2 118.5h0.6v0.6h-0.6zM531.6 117.0h0.3v0.3h-0.3zM533.4 118.8h0.5v0.5h-0.5zM529.5 123.1h0.4v0.4h-0.4zM529.6 117.8h0.5v0.5h-0.5zM532.5 120.3h0.9v0.9h-0.9zM527.9 119.4h1.0v1.0h-1.0zM529.8 119.7h0.3v0.3h-0.3zM530.7 120.1h0.4v0.4h-0.4zM525.4 117.8h0.6v0.6h-0.6zM528.0 120.5h0.5v0.5h-0.5zM535.4 120.3h0.3v0.3h-0.3zM525.5 119.3h0.4v0.4h-0.4zM531.1 120.9h0.6v0.6h-0.6zM538.2 118.3h0.3v0.3h-0.3zM537.9 120.1h0.6v0.6h-0.6zM531.4 119.4h0.9v0.9h-0.9zM534.9 115.7h0.4v0.4h-0.4zM533.4 120.2h0.8v0.8h-0.8zM536.8 118.2h0.8v0.8h-0.8zM528.5 119.8h0.8v0.8h-0.8zM532.2 122.9h0.5v0.5h-0.5zM533.8 120.7h0.8v0.8h-0.8zM532.8 120.0h0.7v0.7h-0.7zM529.2 120.5h0.3v0.3h-0.3zM529.8 122.2h0.7v0.7h-0.7zM534.1 118.1h0.4v0.4h-0.4zM535.8 118.8h0.3v0.3h-0.3zM526.8 119.4h0.4v0.4h-0.4zM529.1 117.0h0.3v0.3h-0.3zM529.2 121.5h0.4v0.4h-0.4zM533.0 116.6h0.4v0.4h-0.4zM535.6 118.9h0.4v0.4h-0.4zM532.3 121.9h1.0v1.0h-1.0zM529.3 119.4h0.6v0.6h-0.6zM529.2 117.2h0.5v0.5h-0.5zM532.6 121.9h0.3v0.3h-0.3zM536.0 120.4h0.9v0.9h-0.9zM530.7 115.0h0.5v0.5h-0.5zM534.2 122.9h0.3v0.3h-0.3zM529.7 117.7h0.5v0.5h-0.5zM531.6 119.5h0.5v0.5h-0.5zM534.2 118.9h0.4v0.4h-0.4zM527.3 122.3h0.6v0.6h-0.6zM535.2 120.0h0.9v0.9h-0.9zM533.1 121.8h0.3v0.3h-0.3zM526.0 121.3h0.3v0.3h-0.3zM533.4 119.6h0.4v0.4h-0.4zM531.4 116.5h0.5v0.5h-0.5zM535.4 118.8h0.8v0.8h-0.8zM530.6 120.5h0.8v0.8h-0.8zM536.9 117.6h0.3v0.3h-0.3zM532.1 122.4h1.0v1.0h-1.0zM529.3 120.4h0.6v0.6h-0.6zM534.3 118.6h0.8v0.8h-0.8zM534.0 116.5h0.5v0.5h-0.5zM529.7 121.6h0.3v0.3h-0.3zM532.9 121.7h0.3v0.3h-0.3zM535.4 119.8h1.0v1.0h-1.0zM535.3 117.5h0.3v0.3h-0.3zM535.5 120.9h0.6v0.6h-0.6zM531.9 121.7h0.8v0.8h-0.8zM531.4 115.9h0.3v0.3h-0.3zM533.4 117.7h0.5v0.5h-0.5zM531.3 118.1h0.4v0.4h-0.4zM534.9 122.1h0.5v0.5h-0.5zM526.7 121.5h0.4v0.4h-0.4zM533.8 116.0h0.3v0.3h-0.3zM524.8 120.0h0.9v0.9h-0.9zM533.9 119.7h0.4v0.4h-0.4zM537.4 118.8h0.5v0.5h-0.5zM533.8 117.9h0.8v0.8h-0.8zM533.5 119.0h0.7v0.7h-0.7zM532.1 120.9h0.4v0.4h-0.4zM531.3 122.3h0.4v0.4h-0.4zM535.4 119.5h0.4v0.4h-0.4zM530.2 121.1h0.7v0.7h-0.7zM533.2 119.8h0.7v0.7h-0.7zM530.6 118.8h0.8v0.8h-0.8zM529.1 120.2h1.0v1.0h-1.0zM529.9 121.5h0.6v0.6h-0.6zM535.1 117.0h0.4v0.4h-0.4zM531.2 118.4h0.9v0.9h-0.9zM526.9 120.7h0.9v0.9h-0.9zM529.9 119.6h0.7v0.7h-0.7z" fill="#000" opacity="0.85"/>
<ellipse cx="551.3" cy="118.7" rx="3.6" ry="6.1" fill="url(#g1)"/><path d="M549.7 115.4h0.7v0.7h-0.7zM549.9 121.1h0.5v0.5h-0.5zM548.7 118.1h0.6v0.6h-0.6zM552.3 114.1h0.3v0.3h-0.3zM554.6 116.6h0.3v0.3h-0.3zM553.9 116.5h0.7v0.7h-0.7zM552.1 116.0h0.4v0.4h-0.4zM547.9 122.6h0.4v0.4h-0.4zM551.8 122.6h0.5v0.5h-0.5zM552.8 121.1h0.9v0.9h-0.9zM554.4 120.1h0.3v0.3h-0.3zM552.0 116.7h0.7v0.7h-0.7zM550.0 116.4h0.7v0.7h-0.7zM548.7 120.9h0.6v0.6h-0.6zM554.1 119.4h0.4v0.4h-0.4zM551.6 113.4h0.4v0.4h-0.4zM550.4 118.9h0.6v0.6h-0.6zM553.4 120.9h0.3v0.3h-0.3zM550.5 117.1h0.8v0.8h-0.8zM550.4 118.6h0.5v0.5h-0.5zM552.9 117.8h1.0v1.0h-1.0zM551.0 114.3h1.0v1.0h-1.0zM546.7 119.1h0.4v0.4h-0.4zM551.9 114.6h0.5v0.5h-0.5zM551.4 115.6h0.5v0.5h-0.5zM551.9 116.5h0.9v0.9h-0.9zM551.8 121.8h0.5v0.5h-0.5zM552.5 119.1h1.0v1.0h-1.0zM550.1 114.6h0.8v0.8h-0.8zM553.5 121.9h0.5v0.5h-0.5zM553.3 115.2h0.9v0.9h-0.9zM554.4 122.8h0.5v0.5h-0.5zM552.0 114.6h0.7v0.7h-0.7zM549.3 122.7h0.4v0.4h-0.4zM551.3 117.0h0.4v0.4h-0.4zM548.8 113.7h0.7v0.7h-0.7zM551.3 118.8h0.4v0.4h-0.4zM549.5 115.9h0.9v0.9h-0.9zM552.6 121.1h0.3v0.3h-0.3zM552.9 118.7h0.5v0.5h-0.5zM551.8 123.6h0.4v0.4h-0.4zM549.9 116.4h1.0v1.0h-1.0zM551.3 120.4h0.7v0.7h-0.7zM553.4 115.0h0.4v0.4h-0.4zM554.4 119.0h0.5v0.5h-0.5zM549.4 114.5h0.8v0.8h-0.8zM551.3 122.8h0.6v0.6h-0.6zM550.3 119.9h0.8v0.8h-0.8zM554.8 119.1h0.4v0.4h-0.4zM552.2 123.3h0.7v0.7h-0.7zM551.8 116.6h0.5v0.5h-0.5zM555.2 120.8h0.8v0.8h-0.8zM555.2 118.9h0.6v0.6h-0.6zM551.2 115.3h0.3v0.3h-0.3zM551.4 119.8h0.8v0.8h-0.8zM550.0 112.6h0.4v0.4h-0.4zM548.6 117.1h0.6v0.6h-0.6zM550.9 125.1h0.4v0.4h-0.4zM551.6 118.2h0.4v0.4h-0.4zM551.1 111.7h0.5v0.5h-0.5zM552.6 116.7h0.9v0.9h-0.9zM549.0 114.5h1.0v1.0h-1.0zM547.6 119.9h0.9v0.9h-0.9zM548.3 120.8h0.5v0.5h-0.5zM551.8 122.1h0.9v0.9h-0.9zM551.6 119.3h0.9v0.9h-0.9zM550.8 120.0h0.3v0.3h-0.3zM550.1 113.5h0.8v0.8h-0.8zM553.6 120.4h0.9v0.9h-0.9zM552.3 114.9h0.9v0.9h-0.9zM553.6 116.4h0.4v0.4h-0.4zM551.9 119.6h0.9v0.9h-0.9zM548.9 114.1h0.5v0.5h-0.5zM552.4 120.0h0.4v0.4h-0.4zM550.6 121.2h0.4v0.4h-0.4zM550.7 123.3h0.5v0.5h-0.5zM554.4 117.5h0.7v0.7h-0.7zM553.5 119.4h0.8v0.8h-0.8zM549.5 123.0h0.4v0.4h-0.4zM552.2 117.0h0.4v0.4h-0.4zM553.2 118.7h1.0v1.0h-1.0zM553.8 118.8h0.8v0.8h-0.8zM552.2 122.3h0.9v0.9h-0.9zM551.1 123.8h0.4v0.4h-0.4zM550.7 115.6h0.7v0.7h-0.7zM554.5 121.7h0.8v0.8h-0.8zM549.9 116.2h0.5v0.5h-0.5zM552.3 117.2h0.3v0.3h-0.3zM551.9 122.5h0.6v0.6h-0.6zM549.2 122.0h0.6v0.6h-0.6zM547.7 117.4h0.7v0.7h-0.7zM550.4 120.9h0.9v0.9h-0.9zM550.0 115.1h0.6v0.6h-0.6zM551.6 115.2h0.6v0.6h-0.6zM552.4 117.1h0.5v0.5h-0.5zM550.6 114.5h0.4v0.4h-0.4zM551.3 122.3h0.4v0.4h-0.4zM550.3 121.8h0.8v0.8h-0.8zM553.4 121.3h0.5v0.5h-0.5zM555.0 118.0h0.6v0.6h-0.6z" fill="#000" opacity="0.85"/>
<ellipse cx="571.1" cy="118.7" rx="7.5" ry="7.5" fill="url(#g1)"/><path d="M572.1 121.6h0.4v0.4h-0.4zM570.4 119.3h0.7v0.7h-0.7zM569.7 114.9h0.5v0.5h-0.5zM573.5 121.6h0.7v0.7h-0.7zM574.1 116.7h0.7v0.7h-0.7zM568.6 120.0h0.7v0.7h-0.7zM571.9 113.3h0.6v0.6h-0.6zM569.1 116.3h0.6v0.6h-0.6zM574.4 121.0h0.6v0.6h-0.6zM569.4 116.9h0.5v0.5h-0.5zM568.4 116.1h0.8v0.8h-0.8zM573.2 123.3h0.5v0.5h-0.5zM567.5 118.9h0.5v0.5h-0.5zM574.3 123.8h0.5v0.5h-0.5zM574.4 121.1h0.6v0.6h-0.6zM566.0 118.3h0.5v0.5h-0.5zM567.6 120.9h0.6v0.6h-0.6zM568.4 120.8h0.8v0.8h-0.8zM570.4 119.5h0.5v0.5h-0.5zM574.3 118.9h0.6v0.6h-0.6zM569.8 120.4h0.7v0.7h-0.7zM574.0 117.5h0.7v0.7h-0.7zM569.7 119.8h0.7v0.7h-0.7zM572.6 114.9h0.6v0.6h-0.6zM571.8 123.3h0.6v0.6h-0.6zM573.0 114.5h0.4v0.4h-0.4zM568.9 118.0h0.4v0.4h-0.4zM572.6 116.7h0.4v0.4h-0.4zM569.7 119.4h0.6v0.6h-0.6zM570.7 120.9h0.5v0.5h-0.5zM566.9 120.7h0.4v0.4h-0.4zM574.2 117.2h0.7v0.7h-0.7zM574.0 116.7h0.7v0.7h-0.7zM570.8 118.4h0.8v0.8h-0.8zM570.0 117.1h0.3v0.3h-0.3zM571.5 122.8h0.3v0.3h-0.3zM574.1 116.6h0.7v0.7h-0.7zM567.1 115.4h0.7v0.7h-0.7zM572.0 114.9h0.6v0.6h-0.6zM566.8 117.8h0.7v0.7h-0.7zM569.0 117.9h0.3v0.3h-0.3zM569.9 118.7h0.3v0.3h-0.3zM567.3 118.9h0.7v0.7h-0.7zM575.8 118.9h0.6v0.6h-0.6zM568.9 114.9h0.5v0.5h-0.5zM572.6 118.3h0.6v0.6h-0.6zM575.6 119.5h0.8v0.8h-0.8zM568.6 123.3h0.5v0.5h-0.5zM572.0 118.0h0.6v0.6h-0.6zM568.8 122.4h0.5v0.5h-0.5zM567.4 118.1h0.5v0.5h-0.5zM566.9 120.9h0.4v0.4h-0.4zM572.7 115.7h0.4v0.4h-0.4zM565.4 118.4h0.7v0.7h-0.7zM569.9 120.9h0.6v0.6h-0.6zM569.0 116.3h0.6v0.6h-0.6zM573.1 116.9h0.4v0.4h-0.4zM574.0 118.8h0.6v0.6h-0.6zM567.9 113.7h0.6v0.6h-0.6zM567.6 115.5h0.6v0.6h-0.6zM570.0 116.2h0.5v0.5h-0.5zM571.2 117.4h0.3v0.3h-0.3zM572.0 113.2h0.5v0.5h-0.5zM573.2 114.3h0.4v0.4h-0.4zM570.1 121.5h0.5v0.5h-0.5zM568.9 115.9h0.6v0.6h-0.6zM573.2 119.2h0.6v0.6h-0.6zM573.2 117.5h0.5v0.5h-0.5zM565.5 115.0h0.5v0.5h-0.5zM569.5 119.6h0.4v0.4h-0.4z" fill="#000" opacity="0.65"/>
<ellipse cx="490.7" cy="138.8" rx="8.0" ry="8.0" fill="url(#g1)"/><path d="M491.0 139.2h0.8v0.8h-0.8zM493.8 141.8h1.0v1.0h-1.0zM491.3 139.5h0.5v0.5h-0.5zM490.5 137.0h0.9v0.9h-0.9zM489.2 132.6h0.3v0.3h-0.3zM487.3 135.3h1.0v1.0h-1.0zM490.5 145.6h0.3v0.3h-0.3zM496.5 139.4h0.3v0.3h-0.3zM489.2 142.5h1.0v1.0h-1.0zM489.4 138.9h0.7v0.7h-0.7zM487.2 140.2h0.9v0.9h-0.9zM487.3 142.8h0.6v0.6h-0.6zM485.5 143.4h0.9v0.9h-0.9zM488.6 137.9h1.1v1.1h-1.1zM489.3 134.2h0.8v0.8h-0.8zM496.5 138.0h0.5v0.5h-0.5zM486.0 141.1h0.8v0.8h-0.8zM485.2 134.7h0.5v0.5h-0.5zM493.6 138.9h0.7v0.7h-0.7zM492.3 135.2h1.0v1.0h-1.0zM492.9 133.4h0.5v0.5h-0.5zM494.3 134.0h1.0v1.0h-1.0zM489.7 140.3h0.9v0.9h-0.9zM492.8 145.2h0.4v0.4h-0.4zM486.9 135.8h0.4v0.4h-0.4zM490.5 145.0h0.6v0.6h-0.6zM496.1 142.2h0.4v0.4h-0.4zM484.4 135.4h0.7v0.7h-0.7zM487.1 139.4h0.4v0.4h-0.4zM492.6 143.0h0.7v0.7h-0.7zM488.0 140.7h0.3v0.3h-0.3zM493.4 138.8h0.8v0.8h-0.8zM491.3 136.4h0.5v0.5h-0.5zM490.1 138.8h1.1v1.1h-1.1zM493.6 135.6h0.5v0.5h-0.5zM491.6 133.8h0.9v0.9h-0.9zM492.8 134.4h0.3v0.3h-0.3zM491.3 140.6h0.3v0.3h-0.3zM485.6 136.9h1.1v1.1h-1.1zM492.1 138.0h0.6v0.6h-0.6zM494.3 142.2h0.7v0.7h-0.7zM486.6 133.8h0.6v0.6h-0.6zM487.7 139.8h1.1v1.1h-1.1zM490.9 139.8h0.5v0.5h-0.5zM496.4 134.8h0.3v0.3h-0.3zM492.0 133.4h1.1v1.1h-1.1zM493.2 139.7h1.0v1.0h-1.0zM489.2 135.7h0.9v0.9h-0.9zM493.0 140.6h0.4v0.4h-0.4zM488.7 139.1h0.4v0.4h-0.4zM490.4 138.1h0.4v0.4h-0.4zM495.3 139.9h1.0v1.0h-1.0zM493.6 135.6h0.6v0.6h-0.6zM496.5 142.9h0.8v0.8h-0.8zM486.6 140.1h0.7v0.7h-0.7zM489.4 137.5h0.3v0.3h-0.3zM489.9 135.5h1.0v1.0h-1.0zM490.4 141.8h0.5v0.5h-0.5zM492.1 136.5h0.7v0.7h-0.7zM488.9 142.7h1.1v1.1h-1.1zM496.6 141.0h0.4v0.4h-0.4zM488.0 139.2h0.4v0.4h-0.4zM485.5 144.8h1.0v1.0h-1.0zM494.0 141.2h0.3v0.3h-0.3zM490.1 134.6h0.3v0.3h-0.3zM491.6 136.3h0.3v0.3h-0.3zM492.4 135.8h0.6v0.6h-0.6zM493.2 137.3h0.4v0.4h-0.4zM493.3 144.3h0.4v0.4h-0.4zM492.4 139.7h0.7v0.7h-0.7zM490.3 141.7h0.9v0.9h-0.9zM492.1 135.4h0.3v0.3h-0.3zM490.2 134.5h0.3v0.3h-0.3zM492.3 134.9h1.0v1.0h-1.0zM489.8 138.9h0.7v0.7h-0.7zM492.4 137.1h1.0v1.0h-1.0zM489.2 140.5h0.8v0.8h-0.8zM494.9 138.9h0.7v0.7h-0.7zM495.2 143.1h1.0v1.0h-1.0zM488.7 143.0h0.9v0.9h-0.9zM497.5 141.6h0.7v0.7h-0.7zM486.2 138.5h0.3v0.3h-0.3zM492.9 138.4h0.3v0.3h-0.3zM490.7 142.5h0.3v0.3h-0.3zM490.1 137.1h0.8v0.8h-0.8zM486.3 136.5h0.3v0.3h-0.3zM493.1 136.2h0.4v0.4h-0.4zM487.1 139.0h0.4v0.4h-0.4zM488.7 140.1h1.0v1.0h-1.0zM493.9 143.0h0.4v0.4h-0.4zM493.2 134.0h0.6v0.6h-0.6zM492.9 135.4h1.1v1.1h-1.1zM491.2 136.0h0.5v0.5h-0.5zM484.1 141.6h1.0v1.0h-1.0zM492.2 135.3h0.7v0.7h-0.7zM495.4 137.6h0.6v0.6h-0.6zM488.2 136.1h0.3v0.3h-0.3zM488.1 140.0h0.4v0.4h-0.4zM497.4 137.5h0.8v0.8h-0.8zM493.3 132.2h0.3v0.3h-0.3zM488.5 136.1h0.5v0.5h-0.5zM484.7 137.2h0.5v0.5h-0.5zM485.6 138.2h0.5v0.5h-0.5zM489.5 142.2h0.8v0.8h-0.8zM494.2 137.8h0.6v0.6h-0.6zM489.0 138.5h0.4v0.4h-0.4zM489.8 142.0h0.5v0.5h-0.5zM495.3 141.7h0.8v0.8h-0.8zM487.2 137.2h0.9v0.9h-0.9zM486.1 140.0h0.6v0.6h-0.6zM489.8 141.1h0.7v0.7h-0.7zM488.4 140.9h0.5v0.5h-0.5zM492.7 136.5h0.7v0.7h-0.7zM489.6 143.9h0.9v0.9h-0.9zM491.8 140.4h0.6v0.6h-0.6zM494.0 140.2h0.9v0.9h-0.9zM493.6 141.2h0.9v0.9h-0.9zM492.5 141.4h0.8v0.8h-0.8zM485.7 134.3h0.7v0.7h-0.7zM490.3 132.8h0.7v0.7h-0.7zM492.1 132.5h0.4v0.4h-0.4zM491.0 138.5h0.7v0.7h-0.7zM484.5 138.9h0.6v0.6h-0.6zM492.0 133.0h0.6v0.6h-0.6zM486.2 140.2h0.5v0.5h-0.5zM487.5 141.4h0.5v0.5h-0.5zM492.0 133.4h0.6v0.6h-0.6zM491.7 141.1h0.7v0.7h-0.7zM488.7 137.7h0.5v0.5h-0.5zM494.7 132.9h0.4v0.4h-0.4zM487.2 140.5h0.3v0.3h-0.3zM485.7 136.7h0.9v0.9h-0.9zM484.8 137.4h0.7v0.7h-0.7zM489.4 135.7h0.8v0.8h-0.8zM486.8 144.1h0.7v0.7h-0.7zM493.5 140.8h0.7v0.7h-0.7zM484.1 135.5h0.7v0.7h-0.7zM484.8 141.1h0.5v0.5h-0.5zM486.5 138.0h0.5v0.5h-0.5zM496.1 138.1h0.3v0.3h-0.3zM495.5 135.1h1.1v1.1h-1.1zM493.0 136.9h0.5v0.5h-0.5zM487.3 138.6h0.4v0.4h-0.4zM487.8 135.8h1.1v1.1h-1.1zM489.9 137.9h0.9v0.9h-0.9zM489.5 142.0h0.5v0.5h-0.5zM493.5 134.5h0.4v0.4h-0.4zM486.9 138.9h0.8v0.8h-0.8zM484.5 137.6h0.6v0.6h-0.6zM492.7 140.8h0.3v0.3h-0.3zM492.7 140.3h0.9v0.9h-0.9zM487.8 136.3h0.3v0.3h-0.3zM491.2 135.0h0.6v0.6h-0.6zM491.8 140.8h1.0v1.0h-1.0zM487.7 137.1h0.6v0.6h-0.6zM496.3 140.8h1.1v1.1h-1.1zM487.0 140.3h0.3v0.3h-0.3zM495.1 136.8h1.0v1.0h-1.0zM492.1 135.6h1.1v1.1h-1.1zM485.9 139.0h0.6v0.6h-0.6zM490.2 136.4h1.0v1.0h-1.0zM486.3 139.3h0.4v0.4h-0.4zM488.6 141.5h0.5v0.5h-0.5zM488.8 138.0h0.6v0.6h-0.6zM489.8 139.5h1.0v1.0h-1.0zM489.3 140.7h0.5v0.5h-0.5zM490.8 140.1h0.5v0.5h-0.5zM492.7 141.9h0.5v0.5h-0.5zM491.8 137.0h1.0v1.0h-1.0zM491.4 136.8h0.9v0.9h-0.9zM487.3 142.1h1.1v1.1h-1.1zM487.9 138.7h0.4v0.4h-0.4zM489.7 135.1h0.7v0.7h-0.7zM488.5 141.2h0.4v0.4h-0.4zM492.2 137.3h0.7v0.7h-0.7zM490.1 143.7h0.8v0.8h-0.8zM487.9 137.5h0.3v0.3h-0.3zM492.9 143.2h0.8v0.8h-0.8zM493.9 141.4h0.7v0.7h-0.7zM490.3 140.1h0.4v0.4h-0.4zM493.7 141.9h0.6v0.6h-0.6zM496.3 135.2h1.0v1.0h-1.0zM492.2 140.4h0.8v0.8h-0.8zM489.0 136.0h0.8v0.8h-0.8zM489.5 135.3h0.5v0.5h-0.5zM489.4 137.4h1.0v1.0h-1.0zM490.3 135.3h0.3v0.3h-0.3zM491.9 140.8h0.6v0.6h-0.6zM494.2 139.7h0.4v0.4h-0.4zM493.5 134.4h0.5v0.5h-0.5zM486.6 140.6h0.3v0.3h-0.3zM493.0 134.9h0.3v0.3h-0.3zM492.7 136.2h0.5v0.5h-0.5zM494.0 141.6h1.0v1.0h-1.0zM490.7 136.8h0.6v0.6h-0.6zM490.6 134.2h0.3v0.3h-0.3zM495.4 137.2h0.8v0.8h-0.8zM490.3 132.9h0.6v0.6h-0.6zM495.2 140.4h0.7v0.7h-0.7zM493.0 137.7h0.3v0.3h-0.3zM489.4 134.5h0.7v0.7h-0.7zM495.5 137.9h0.5v0.5h-0.5zM493.8 140.1h0.4v0.4h-0.4zM489.8 141.2h0.8v0.8h-0.8zM490.9 141.8h0.6v0.6h-0.6zM493.5 137.6h1.0v1.0h-1.0zM493.2 141.9h0.9v0.9h-0.9zM486.8 137.6h0.8v0.8h-0.8zM486.8 136.0h1.0v1.0h-1.0zM492.9 140.8h0.4v0.4h-0.4zM493.1 139.8h0.8v0.8h-0.8zM489.0 139.4h0.6v0.6h-0.6zM489.6 140.2h0.3v0.3h-0.3zM494.5 138.6h0.9v0.9h-0.9zM494.0 138.4h0.7v0.7h-0.7zM488.2 139.9h0.3v0.3h-0.3zM495.3 136.3h1.0v1.0h-1.0zM489.3 136.8h0.4v0.4h-0.4zM497.1 139.9h0.5v0.5h-0.5zM493.0 144.2h1.0v1.0h-1.0zM493.9 144.5h0.9v0.9h-0.9zM489.2 141.6h0.5v0.5h-0.5zM487.9 141.8h1.0v1.0h-1.0zM490.8 140.1h0.8v0.8h-0.8zM493.4 133.0h1.1v1.1h-1.1zM487.4 138.9h0.5v0.5h-0.5zM489.0 137.9h0.4v0.4h-0.4zM486.7 140.3h0.3v0.3h-0.3zM487.9 139.9h0.3v0.3h-0.3zM494.3 133.3h0.6v0.6h-0.6zM489.7 143.6h0.6v0.6h-0.6zM488.4 142.6h1.0v1.0h-1.0zM492.4 137.6h0.6v0.6h-0.6zM488.1 137.7h0.3v0.3h-0.3zM488.3 143.6h1.0v1.0h-1.0zM495.8 133.0h0.8v0.8h-0.8zM491.3 137.3h0.8v0.8h-0.8zM489.0 144.5h0.7v0.7h-0.7zM488.9 136.5h1.0v1.0h-1.0zM493.6 139.3h0.6v0.6h-0.6z" fill="#000" opacity="0.95"/>
<circle cx="490.7" cy="138.8" r="4.500" fill="url(#g2)"/>
<path d="M515.5 139.9h0.5v0.5h-0.5zM507.8 139.9h0.4v0.4h-0.4zM514.1 139.7h0.4v0.4h-0.4zM515.2 140.6h0.3v0.3h-0.3zM508.8 137.1h0.4v0.4h-0.4zM512.2 141.0h0.4v0.4h-0.4zM510.3 136.8h0.3v0.3h-0.3zM506.3 139.8h0.5v0.5h-0.5z" fill="#000" opacity="0.45"/>
<path d="M531.6 135.8h0.7v0.7h-0.7zM535.8 141.9h0.4v0.4h-0.4zM537.0 137.2h0.3v0.3h-0.3zM531.7 137.4h0.5v0.5h-0.5zM535.5 139.0h0.4v0.4h-0.4zM530.1 133.6h0.7v0.7h-0.7zM535.7 134.2h0.8v0.8h-0.8zM533.9 142.9h0.7v0.7h-0.7zM529.7 134.7h0.5v0.5h-0.5zM530.9 131.5h0.3v0.3h-0.3zM529.8 137.4h0.8v0.8h-0.8zM536.7 143.1h0.4v0.4h-0.4zM533.3 143.5h0.6v0.6h-0.6zM532.0 139.1h0.8v0.8h-0.8zM533.1 142.4h0.7v0.7h-0.7zM529.3 140.7h0.6v0.6h-0.6zM528.7 131.7h0.3v0.3h-0.3zM530.1 140.7h0.8v0.8h-0.8zM531.8 137.7h0.8v0.8h-0.8zM529.8 135.1h0.4v0.4h-0.4zM534.3 134.5h0.6v0.6h-0.6zM534.1 140.0h0.8v0.8h-0.8zM530.6 138.1h0.5v0.5h-0.5zM527.1 139.5h0.5v0.5h-0.5zM535.8 138.8h0.3v0.3h-0.3zM527.2 139.7h0.3v0.3h-0.3zM530.2 136.1h0.6v0.6h-0.6zM531.1 143.5h0.9v0.9h-0.9zM532.7 138.6h0.8v0.8h-0.8zM535.7 134.2h0.7v0.7h-0.7z" fill="#000" opacity="0.8"/>
<path d="M548.8 140.5h1.2v1.2h-1.2zM555.3 136.0h1.1v1.1h-1.1zM551.0 133.0h0.6v0.6h-0.6zM548.7 136.8h0.6v0.6h-0.6zM548.7 142.9h0.6v0.6h-0.6zM551.4 140.2h0.4v0.4h-0.4zM556.7 137.9h0.7v0.7h-0.7zM549.0 136.5h0.3v0.3h-0.3zM550.1 141.3h0.8v0.8h-0.8zM555.4 135.9h0.9v0.9h-0.9zM553.6 138.9h1.3v1.3h-1.3zM548.2 141.6h1.2v1.2h-1.2zM556.1 139.8h0.5v0.5h-0.5zM551.3 138.3h0.5v0.5h-0.5zM550.6 135.1h0.5v0.5h-0.5zM546.4 133.9h0.5v0.5h-0.5zM550.7 131.4h0.3v0.3h-0.3zM553.1 133.0h0.4v0.4h-0.4zM553.4 142.7h0.9v0.9h-0.9zM553.5 136.5h1.0v1.0h-1.0zM548.8 134.2h0.6v0.6h-0.6zM553.8 138.6h0.9v0.9h-0.9zM549.0 141.5h0.5v0.5h-0.5zM550.4 137.8h0.8v0.8h-0.8zM552.8 137.5h1.0v1.0h-1.0zM550.6 138.9h0.4v0.4h-0.4zM551.5 135.5h0.7v0.7h-0.7zM546.7 136.5h0.9v0.9h-0.9zM548.1 135.2h0.5v0.5h-0.5zM549.8 131.6h0.6v0.6h-0.6zM552.1 131.9h0.5v0.5h-0.5zM547.0 137.0h0.3v0.3h-0.3zM545.6 138.5h0.6v0.6h-0.6zM554.6 137.4h0.3v0.3h-0.3zM552.8 137.9h0.8v0.8h-0.8zM548.2 136.5h0.6v0.6h-0.6zM553.0 140.0h1.2v1.2h-1.2zM551.9 138.7h0.5v0.5h-0.5zM555.9 137.1h0.6v0.6h-0.6zM552.4 134.2h1.2v1.2h-1.2zM554.1 139.9h0.9v0.9h-0.9zM548.1 139.9h0.8v0.8h-0.8zM545.0 141.6h0.9v0.9h-0.9zM551.7 140.1h0.7v0.7h-0.7zM551.7 140.8h0.9v0.9h-0.9zM549.8 142.3h0.8v0.8h-0.8zM555.1 143.4h0.5v0.5h-0.5zM551.3 133.0h0.6v0.6h-0.6zM546.9 138.0h1.0v1.0h-1.0zM547.8 135.2h1.2v1.2h-1.2z" fill="#000" opacity="0.9"/>
<path d="M572.5 142.9h0.6v0.6h-0.6zM573.3 135.1h0.7v0.7h-0.7zM570.9 138.3h0.7v0.7h-0.7zM575.8 137.9h0.6v0.6h-0.6zM573.5 139.3h0.3v0.3h-0.3zM567.4 143.5h0.6v0.6h-0.6zM572.0 137.5h0.6v0.6h-0.6zM570.6 136.5h0.4v0.4h-0.4zM569.8 138.2h0.7v0.7h-0.7zM569.3 141.7h0.5v0.5h-0.5zM573.3 140.1h0.6v0.6h-0.6zM574.4 142.0h0.3v0.3h-0.3zM567.6 142.2h0.4v0.4h-0.4zM572.8 145.3h0.6v0.6h-0.6zM570.8 139.9h0.3v0.3h-0.3zM575.2 138.8h0.5v0.5h-0.5zM570.6 138.2h0.5v0.5h-0.5zM566.0 136.2h0.7v0.7h-0.7zM574.6 134.0h0.4v0.4h-0.4zM566.0 140.5h0.4v0.4h-0.4zM568.4 139.3h0.3v0.3h-0.3zM567.1 134.4h0.5v0.5h-0.5zM569.3 139.4h0.3v0.3h-0.3zM575.1 131.6h0.3v0.3h-0.3zM569.7 133.9h0.5v0.5h-0.5zM569.4 141.5h0.6v0.6h-0.6zM574.0 133.8h0.7v0.7h-0.7zM571.7 143.5h0.4v0.4h-0.4zM570.1 133.7h0.5v0.5h-0.5zM569.4 134.1h0.5v0.5h-0.5zM571.8 141.8h0.7v0.7h-0.7zM565.7 138.5h0.5v0.5h-0.5zM571.7 140.7h0.5v0.5h-0.5zM565.6 136.8h0.4v0.4h-0.4zM573.7 142.6h0.5v0.5h-0.5zM574.6 131.0h0.3v0.3h-0.3zM565.9 142.4h0.3v0.3h-0.3zM572.4 139.6h0.4v0.4h-0.4zM572.6 133.4h0.3v0.3h-0.3zM565.4 142.0h0.5v0.5h-0.5z" fill="#000" opacity="0.7"/>
<path d="M484.5 159.3h1.0v1.0h-1.0zM495.5 163.7h0.6v0.6h-0.6zM487.7 157.9h0.6v0.6h-0.6zM489.0 162.5h0.3v0.3h-0.3zM493.4 164.1h0.3v0.3h-0.3zM494.5 164.5h0.5v0.5h-0.5zM489.8 161.9h1.0v1.0h-1.0zM497.0 161.8h1.1v1.1h-1.1zM493.2 163.3h1.0v1.0h-1.0zM488.0 155.1h0.3v0.3h-0.3zM487.1 160.1h0.9v0.9h-0.9zM490.2 163.3h0.9v0.9h-0.9zM493.4 154.0h0.6v0.6h-0.6zM484.8 154.7h0.4v0.4h-0.4zM498.2 157.2h0.6v0.6h-0.6zM489.3 154.4h0.3v0.3h-0.3zM491.8 153.5h0.7v0.7h-0.7zM484.0 158.5h1.0v1.0h-1.0zM497.7 159.4h0.7v0.7h-0.7zM484.5 160.1h0.6v0.6h-0.6zM484.2 159.6h0.7v0.7h-0.7zM485.9 158.7h1.0v1.0h-1.0zM488.3 152.3h0.6v0.6h-0.6zM498.0 160.0h0.8v0.8h-0.8zM492.4 151.4h0.4v0.4h-0.4zM492.0 160.6h1.0v1.0h-1.0zM493.5 159.8h1.0v1.0h-1.0zM489.9 157.6h0.9v0.9h-0.9zM490.3 153.0h0.3v0.3h-0.3zM489.7 153.6h0.8v0.8h-0.8zM498.8 158.3h1.1v1.1h-1.1zM494.4 162.0h0.7v0.7h-0.7zM499.5 158.7h0.5v0.5h-0.5zM491.3 162.8h0.5v0.5h-0.5zM495.4 153.8h0.7v0.7h-0.7zM490.0 159.2h0.5v0.5h-0.5zM496.4 153.1h1.1v1.1h-1.1zM491.4 162.0h0.3v0.3h-0.3zM486.8 157.3h0.7v0.7h-0.7zM485.5 158.8h0.6v0.6h-0.6zM492.7 155.0h1.1v1.1h-1.1zM489.9 157.8h0.5v0.5h-0.5zM486.6 157.3h0.8v0.8h-0.8zM489.7 162.1h1.0v1.0h-1.0zM489.9 164.9h1.0v1.0h-1.0zM487.1 155.4h1.1v1.1h-1.1zM484.5 160.9h0.3v0.3h-0.3zM485.8 161.0h0.3v0.3h-0.3zM493.0 156.7h0.8v0.8h-0.8zM494.9 165.3h0.8v0.8h-0.8zM493.4 153.0h0.9v0.9h-0.9zM489.6 154.5h0.5v0.5h-0.5zM493.2 155.8h1.1v1.1h-1.1zM492.3 160.8h0.3v0.3h-0.3zM493.3 150.8h0.6v0.6h-0.6zM489.4 155.0h1.1v1.1h-1.1zM490.4 155.5h0.3v0.3h-0.3zM491.1 156.8h1.0v1.0h-1.0zM490.6 162.1h0.8v0.8h-0.8zM489.1 163.8h0.4v0.4h-0.4zM495.5 156.0h1.0v1.0h-1.0zM495.7 164.2h1.2v1.2h-1.2zM490.5 159.3h0.6v0.6h-0.6zM489.2 155.4h0.8v0.8h-0.8zM496.1 161.4h0.9v0.9h-0.9zM485.6 161.2h0.4v0.4h-0.4zM492.9 155.9h1.1v1.1h-1.1zM499.4 158.2h0.8v0.8h-0.8zM490.4 162.9h1.0v1.0h-1.0zM483.9 158.5h0.3v0.3h-0.3zM484.2 159.1h0.8v0.8h-0.8zM489.3 157.8h0.4v0.4h-0.4zM490.6 165.9h1.1v1.1h-1.1zM492.7 166.0h0.3v0.3h-0.3zM485.2 153.8h0.6v0.6h-0.6zM497.7 156.2h0.3v0.3h-0.3zM488.9 163.0h0.5v0.5h-0.5zM491.4 155.0h1.0v1.0h-1.0zM491.0 160.4h0.8v0.8h-0.8zM496.5 161.7h1.0v1.0h-1.0zM487.1 155.3h0.3v0.3h-0.3zM489.1 158.2h0.9v0.9h-0.9zM495.7 162.9h0.6v0.6h-0.6zM487.0 163.0h0.4v0.4h-0.4zM495.4 165.2h0.6v0.6h-0.6zM495.7 152.1h0.7v0.7h-0.7zM493.1 160.4h1.1v1.1h-1.1zM495.8 162.2h0.8v0.8h-0.8zM495.6 162.1h0.4v0.4h-0.4zM486.0 157.1h0.6v0.6h-0.6zM493.2 163.2h0.4v0.4h-0.4zM494.3 161.2h1.1v1.1h-1.1zM484.1 158.3h0.3v0.3h-0.3zM496.8 156.4h1.0v1.0h-1.0zM485.6 155.5h0.5v0.5h-0.5zM491.6 155.2h0.5v0.5h-0.5zM496.5 159.3h0.7v0.7h-0.7zM489.6 165.7h0.3v0.3h-0.3zM488.2 156.5h0.8v0.8h-0.8zM493.0 151.8h0.3v0.3h-0.3zM491.8 164.6h1.2v1.2h-1.2zM497.7 160.0h0.9v0.9h-0.9zM493.4 154.1h1.0v1.0h-1.0zM484.1 160.2h0.3v0.3h-0.3zM496.4 156.5h0.6v0.6h-0.6zM495.0 160.5h0.9v0.9h-0.9zM490.3 155.6h0.6v0.6h-0.6zM493.9 161.1h0.5v0.5h-0.5zM487.7 165.3h1.2v1.2h-1.2zM493.0 153.0h0.7v0.7h-0.7zM493.0 150.9h1.0v1.0h-1.0zM489.3 155.7h0.8v0.8h-0.8zM495.6 152.5h0.3v0.3h-0.3zM490.6 153.7h0.4v0.4h-0.4zM498.0 157.0h1.0v1.0h-1.0zM496.4 163.8h1.1v1.1h-1.1zM497.3 154.5h1.0v1.0h-1.0zM493.6 152.6h0.7v0.7h-0.7zM494.8 152.1h1.1v1.1h-1.1zM489.2 165.8h0.8v0.8h-0.8zM494.2 157.5h1.2v1.2h-1.2zM492.5 154.5h1.0v1.0h-1.0zM492.0 161.9h0.7v0.7h-0.7zM492.1 164.0h1.1v1.1h-1.1zM488.9 152.2h0.6v0.6h-0.6zM493.1 151.4h0.9v0.9h-0.9zM498.4 155.8h0.6v0.6h-0.6zM497.1 161.7h1.0v1.0h-1.0zM488.3 163.6h1.0v1.0h-1.0zM491.7 157.9h0.7v0.7h-0.7zM494.2 158.6h1.0v1.0h-1.0zM486.2 161.4h0.7v0.7h-0.7zM489.7 161.6h0.6v0.6h-0.6zM495.1 153.2h0.5v0.5h-0.5zM495.1 160.6h0.9v0.9h-0.9zM485.5 160.7h1.0v1.0h-1.0zM496.4 162.9h0.3v0.3h-0.3zM493.1 155.3h0.5v0.5h-0.5zM496.2 157.1h0.5v0.5h-0.5zM496.4 154.4h1.1v1.1h-1.1zM487.1 161.9h1.2v1.2h-1.2zM483.7 158.0h0.4v0.4h-0.4zM493.2 155.6h0.8v0.8h-0.8zM494.9 158.4h1.1v1.1h-1.1zM484.7 160.4h0.5v0.5h-0.5zM490.1 160.4h0.8v0.8h-0.8zM495.3 154.0h0.6v0.6h-0.6zM498.4 155.1h0.9v0.9h-0.9zM497.2 161.3h0.7v0.7h-0.7zM496.2 157.1h0.9v0.9h-0.9zM488.3 154.8h0.7v0.7h-0.7zM488.2 151.6h0.7v0.7h-0.7zM486.4 164.3h0.3v0.3h-0.3zM495.0 152.7h0.8v0.8h-0.8zM485.0 160.6h1.1v1.1h-1.1zM490.7 151.5h0.3v0.3h-0.3zM490.3 161.0h1.2v1.2h-1.2zM494.0 156.5h0.8v0.8h-0.8zM490.1 157.6h0.6v0.6h-0.6zM491.5 152.0h0.5v0.5h-0.5zM491.9 154.1h0.8v0.8h-0.8zM484.6 162.2h0.9v0.9h-0.9zM493.8 152.2h0.6v0.6h-0.6zM498.2 156.8h0.9v0.9h-0.9zM491.0 161.5h0.8v0.8h-0.8zM494.9 152.0h0.6v0.6h-0.6zM495.3 162.8h1.1v1.1h-1.1zM495.2 164.2h0.4v0.4h-0.4zM490.9 160.1h0.5v0.5h-0.5zM485.8 163.7h1.2v1.2h-1.2z" fill="#000" opacity="0.85"/>
<path d="M513.2 162.7h1.1v1.1h-1.1zM513.0 162.9h0.7v0.7h-0.7zM514.8 161.1h0.6v0.6h-0.6zM505.1 163.9h0.5v0.5h-0.5zM513.7 166.1h0.7v0.7h-0.7zM514.9 152.6h1.0v1.0h-1.0zM510.1 161.4h1.0v1.0h-1.0zM505.2 159.6h0.9v0.9h-0.9zM511.5 153.9h0.6v0.6h-0.6zM516.8 155.3h0.5v0.5h-0.5zM508.4 155.2h1.0v1.0h-1.0zM518.9 160.4h0.8v0.8h-0.8zM506.4 164.9h0.5v0.5h-0.5zM511.5 160.6h0.8v0.8h-0.8zM511.6 151.4h0.6v0.6h-0.6zM512.4 155.7h0.5v0.5h-0.5zM506.3 151.8h0.9v0.9h-0.9zM508.7 151.4h0.6v0.6h-0.6zM518.2 155.7h0.6v0.6h-0.6zM505.4 163.1h0.6v0.6h-0.6zM514.5 165.7h0.8v0.8h-0.8zM504.5 157.5h1.1v1.1h-1.1zM514.7 162.1h0.3v0.3h-0.3zM506.3 161.5h1.1v1.1h-1.1zM508.2 152.8h0.6v0.6h-0.6zM507.4 156.4h1.1v1.1h-1.1zM513.3 150.8h0.4v0.4h-0.4zM507.9 151.9h0.7v0.7h-0.7zM517.9 153.6h1.0v1.0h-1.0zM514.4 152.2h1.1v1.1h-1.1zM516.2 163.6h0.9v0.9h-0.9zM508.0 155.5h0.3v0.3h-0.3zM505.3 153.7h0.5v0.5h-0.5zM512.3 162.3h0.3v0.3h-0.3zM507.6 150.9h1.0v1.0h-1.0zM506.9 163.9h0.3v0.3h-0.3zM514.0 154.3h0.3v0.3h-0.3zM509.2 156.1h0.5v0.5h-0.5zM516.7 160.4h0.8v0.8h-0.8zM512.0 156.8h1.0v1.0h-1.0zM514.5 161.0h0.8v0.8h-0.8zM508.8 162.5h0.8v0.8h-0.8zM512.9 165.8h0.4v0.4h-0.4zM515.5 151.9h0.8v0.8h-0.8zM518.8 159.8h0.3v0.3h-0.3zM505.9 158.2h0.3v0.3h-0.3zM506.4 153.1h0.8v0.8h-0.8zM506.5 161.9h0.8v0.8h-0.8zM512.6 166.2h1.2v1.2h-1.2zM514.2 150.5h0.6v0.6h-0.6zM513.7 158.2h0.7v0.7h-0.7zM515.2 162.6h0.9v0.9h-0.9zM509.9 152.8h0.6v0.6h-0.6zM513.4 163.4h0.5v0.5h-0.5zM513.9 165.2h0.7v0.7h-0.7zM507.9 159.8h0.9v0.9h-0.9zM512.8 162.5h0.8v0.8h-0.8zM508.9 150.4h1.0v1.0h-1.0zM519.1 155.8h0.9v0.9h-0.9zM511.0 156.3h0.4v0.4h-0.4zM519.3 159.0h0.9v0.9h-0.9zM508.4 155.2h0.6v0.6h-0.6zM514.9 164.2h1.2v1.2h-1.2zM510.8 160.1h0.4v0.4h-0.4zM506.5 164.7h1.0v1.0h-1.0zM508.8 159.1h0.4v0.4h-0.4zM515.7 164.5h0.7v0.7h-0.7zM519.5 157.9h1.0v1.0h-1.0zM503.8 159.5h0.4v0.4h-0.4zM516.3 162.4h0.7v0.7h-0.7zM512.5 162.5h0.3v0.3h-0.3zM517.4 154.5h1.1v1.1h-1.1zM517.0 157.7h0.9v0.9h-0.9zM505.7 163.5h1.0v1.0h-1.0zM512.0 159.1h0.5v0.5h-0.5zM506.9 155.7h0.3v0.3h-0.3zM515.0 151.8h0.7v0.7h-0.7zM519.1 160.5h0.8v0.8h-0.8zM515.8 160.5h0.8v0.8h-0.8zM515.8 154.5h0.9v0.9h-0.9zM512.6 162.4h1.1v1.1h-1.1zM509.4 160.2h0.8v0.8h-0.8zM514.1 161.1h0.7v0.7h-0.7zM505.6 154.9h0.9v0.9h-0.9zM509.3 159.2h0.9v0.9h-0.9zM516.9 160.3h0.6v0.6h-0.6zM508.1 152.0h0.5v0.5h-0.5zM507.2 152.7h0.7v0.7h-0.7zM516.5 164.7h0.8v0.8h-0.8zM515.2 160.0h1.2v1.2h-1.2zM512.1 163.7h1.0v1.0h-1.0zM514.4 152.3h1.0v1.0h-1.0zM513.9 159.0h1.2v1.2h-1.2zM511.9 156.8h0.3v0.3h-0.3zM511.9 166.6h0.5v0.5h-0.5zM507.5 151.1h0.9v0.9h-0.9zM515.2 156.3h0.4v0.4h-0.4zM518.7 159.2h0.3v0.3h-0.3zM518.5 157.2h0.4v0.4h-0.4zM512.6 155.2h0.7v0.7h-0.7zM517.3 163.0h1.1v1.1h-1.1zM511.7 158.2h1.1v1.1h-1.1zM504.2 155.7h0.7v0.7h-0.7zM506.6 153.9h1.0v1.0h-1.0zM513.1 159.3h0.8v0.8h-0.8zM510.0 163.6h0.3v0.3h-0.3zM511.4 157.1h1.0v1.0h-1.0zM513.6 153.0h0.4v0.4h-0.4zM509.1 155.2h0.7v0.7h-0.7zM517.9 163.7h0.8v0.8h-0.8zM509.8 160.5h0.9v0.9h-0.9zM516.0 152.0h0.3v0.3h-0.3zM508.3 161.8h1.0v1.0h-1.0zM515.4 163.7h1.2v1.2h-1.2zM511.5 157.7h0.3v0.3h-0.3zM516.7 163.0h0.8v0.8h-0.8zM505.7 157.7h0.6v0.6h-0.6zM506.2 154.0h1.1v1.1h-1.1zM510.6 150.8h1.1v1.1h-1.1zM515.1 152.2h0.3v0.3h-0.3zM508.1 151.3h0.7v0.7h-0.7zM514.0 155.9h1.1v1.1h-1.1zM504.7 160.9h0.5v0.5h-0.5zM509.8 163.1h0.6v0.6h-0.6zM516.1 161.5h1.2v1.2h-1.2zM506.7 151.6h1.0v1.0h-1.0zM515.8 151.1h1.0v1.0h-1.0zM510.8 162.6h0.6v0.6h-0.6zM515.4 158.9h1.1v1.1h-1.1zM515.7 156.1h1.0v1.0h-1.0zM512.7 150.5h1.0v1.0h-1.0zM508.7 157.8h1.0v1.0h-1.0zM508.8 164.6h0.6v0.6h-0.6zM503.3 156.4h0.4v0.4h-0.4zM504.7 157.1h0.8v0.8h-0.8zM516.4 156.3h1.1v1.1h-1.1zM508.3 150.6h0.3v0.3h-0.3zM512.5 162.8h1.1v1.1h-1.1zM515.7 158.7h0.9v0.9h-0.9zM515.0 158.1h0.7v0.7h-0.7zM508.7 151.9h1.0v1.0h-1.0zM511.5 154.1h0.5v0.5h-0.5zM518.4 159.6h0.4v0.4h-0.4zM510.9 166.7h0.9v0.9h-0.9zM505.6 154.6h0.8v0.8h-0.8zM509.8 154.0h0.3v0.3h-0.3zM512.3 158.8h0.6v0.6h-0.6zM513.2 160.6h0.7v0.7h-0.7zM518.3 157.0h0.5v0.5h-0.5zM511.8 154.8h0.3v0.3h-0.3zM509.6 163.5h0.9v0.9h-0.9zM504.6 160.8h0.3v0.3h-0.3zM515.9 156.3h1.0v1.0h-1.0zM519.0 159.9h0.5v0.5h-0.5zM516.1 152.4h0.9v0.9h-0.9zM511.3 159.2h0.4v0.4h-0.4zM514.2 156.5h0.9v0.9h-0.9zM505.5 154.8h0.4v0.4h-0.4zM513.0 160.5h1.2v1.2h-1.2zM506.3 163.0h0.8v0.8h-0.8zM511.8 160.5h0.3v0.3h-0.3zM513.2 155.9h1.2v1.2h-1.2zM506.7 163.8h0.4v0.4h-0.4zM512.4 154.2h0.6v0.6h-0.6zM508.6 158.0h0.5v0.5h-0.5zM512.7 154.0h0.6v0.6h-0.6zM511.8 154.4h0.4v0.4h-0.4zM512.4 163.5h0.6v0.6h-0.6zM507.7 153.8h1.1v1.1h-1.1zM518.0 160.5h1.0v1.0h-1.0zM511.5 159.8h0.7v0.7h-0.7zM515.7 162.2h0.9v0.9h-0.9zM513.8 160.0h0.7v0.7h-0.7zM513.3 162.0h0.7v0.7h-0.7zM513.0 159.9h0.6v0.6h-0.6zM503.3 160.0h0.8v0.8h-0.8zM515.0 160.1h1.0v1.0h-1.0zM504.1 155.3h1.2v1.2h-1.2zM513.2 156.2h1.1v1.1h-1.1zM507.3 157.7h0.4v0.4h-0.4zM514.0 155.4h0.3v0.3h-0.3zM510.6 166.5h0.7v0.7h-0.7zM511.1 156.1h0.7v0.7h-0.7zM509.8 161.9h0.9v0.9h-0.9zM509.5 160.6h1.2v1.2h-1.2zM507.8 158.8h0.3v0.3h-0.3zM507.9 153.4h0.3v0.3h-0.3zM504.2 159.7h0.8v0.8h-0.8zM512.0 164.3h0.8v0.8h-0.8zM509.5 155.7h1.0v1.0h-1.0zM518.3 155.9h1.1v1.1h-1.1zM506.0 164.3h0.4v0.4h-0.4zM512.4 164.9h1.1v1.1h-1.1zM514.8 160.3h0.3v0.3h-0.3zM508.4 159.6h0.4v0.4h-0.4zM511.4 151.9h1.1v1.1h-1.1zM505.7 162.4h0.3v0.3h-0.3zM515.3 157.1h0.7v0.7h-0.7zM503.1 157.8h0.7v0.7h-0.7zM518.1 158.0h0.5v0.5h-0.5zM513.3 155.1h1.2v1.2h-1.2zM507.5 159.5h1.2v1.2h-1.2zM509.0 163.3h0.6v0.6h-0.6zM510.8 157.3h0.6v0.6h-0.6zM515.5 165.0h0.3v0.3h-0.3zM508.0 155.7h0.7v0.7h-0.7zM504.8 155.7h0.4v0.4h-0.4zM511.6 161.3h1.2v1.2h-1.2zM513.3 160.9h0.7v0.7h-0.7zM504.4 154.5h0.3v0.3h-0.3zM511.7 161.8h0.8v0.8h-0.8zM506.2 160.0h1.1v1.1h-1.1zM507.2 151.7h1.2v1.2h-1.2zM510.4 166.6h0.6v0.6h-0.6zM519.1 161.0h0.3v0.3h-0.3zM515.9 158.9h0.5v0.5h-0.5zM519.2 156.7h0.6v0.6h-0.6zM503.7 156.9h1.0v1.0h-1.0zM507.9 153.4h0.4v0.4h-0.4zM511.7 165.3h0.8v0.8h-0.8zM513.9 150.7h1.2v1.2h-1.2zM512.2 160.6h1.1v1.1h-1.1zM508.1 156.8h0.9v0.9h-0.9zM511.3 162.5h0.6v0.6h-0.6zM504.5 157.3h0.3v0.3h-0.3zM511.0 151.7h0.7v0.7h-0.7zM507.8 151.7h0.3v0.3h-0.3zM504.5 159.5h0.9v0.9h-0.9zM509.2 155.5h1.2v1.2h-1.2zM512.3 154.4h0.7v0.7h-0.7zM515.1 157.4h0.6v0.6h-0.6zM519.2 156.4h0.5v0.5h-0.5zM510.9 153.3h0.9v0.9h-0.9zM511.7 155.4h0.5v0.5h-0.5zM512.4 162.7h0.3v0.3h-0.3zM515.0 162.5h0.6v0.6h-0.6zM517.1 161.4h1.1v1.1h-1.1zM506.9 156.0h0.9v0.9h-0.9zM508.1 159.7h0.7v0.7h-0.7zM518.3 159.1h0.4v0.4h-0.4zM505.7 164.5h1.0v1.0h-1.0zM514.9 152.5h0.9v0.9h-0.9zM509.1 150.4h0.4v0.4h-0.4zM511.9 153.7h0.5v0.5h-0.5zM514.3 152.4h1.1v1.1h-1.1zM516.0 153.8h0.4v0.4h-0.4zM517.6 159.0h0.9v0.9h-0.9zM511.1 160.6h0.3v0.3h-0.3zM514.7 164.7h0.3v0.3h-0.3zM511.9 162.7h0.9v0.9h-0.9zM512.6 158.3h0.4v0.4h-0.4zM519.1 155.0h0.4v0.4h-0.4zM508.3 163.7h0.6v0.6h-0.6zM506.3 161.3h0.5v0.5h-0.5zM513.7 159.2h0.4v0.4h-0.4zM517.0 162.0h0.9v0.9h-0.9zM510.8 165.9h0.9v0.9h-0.9zM508.2 163.4h0.4v0.4h-0.4zM517.1 155.6h0.3v0.3h-0.3zM515.4 164.2h0.6v0.6h-0.6zM510.6 154.4h1.0v1.0h-1.0zM512.2 155.9h0.8v0.8h-0.8zM514.0 165.0h1.0v1.0h-1.0zM512.4 154.4h0.3v0.3h-0.3zM508.1 152.9h0.4v0.4h-0.4zM513.7 164.4h0.4v0.4h-0.4zM508.6 155.3h0.5v0.5h-0.5zM505.9 161.2h0.9v0.9h-0.9zM518.5 159.8h0.5v0.5h-0.5zM509.7 165.0h0.9v0.9h-0.9z" fill="#000" opacity="0.85"/>
<path d="M525.5 153.4h0.4v0.4h-0.4zM528.8 164.4h0.5v0.5h-0.5zM533.3 161.6h1.0v1.0h-1.0zM534.3 152.4h1.2v1.2h-1.2zM532.4 154.1h0.5v0.5h-0.5zM530.9 156.5h0.8v0.8h-0.8zM532.7 159.3h0.7v0.7h-0.7zM535.7 164.7h1.1v1.1h-1.1zM527.7 159.2h0.4v0.4h-0.4zM525.4 158.1h0.6v0.6h-0.6zM530.0 152.7h1.0v1.0h-1.0zM532.9 159.7h0.6v0.6h-0.6zM527.2 158.8h0.9v0.9h-0.9zM532.0 162.8h0.7v0.7h-0.7zM529.6 151.5h0.6v0.6h-0.6zM523.9 160.9h1.1v1.1h-1.1zM529.3 156.6h0.7v0.7h-0.7zM528.4 155.2h0.3v0.3h-0.3zM538.8 157.5h0.4v0.4h-0.4zM525.0 159.7h0.5v0.5h-0.5zM537.5 161.3h1.0v1.0h-1.0zM529.0 159.3h0.6v0.6h-0.6zM537.7 162.7h0.3v0.3h-0.3zM529.5 165.2h0.4v0.4h-0.4zM532.9 159.7h0.4v0.4h-0.4zM524.0 156.9h0.4v0.4h-0.4zM534.4 164.6h0.7v0.7h-0.7zM529.7 160.8h0.5v0.5h-0.5zM533.9 157.9h0.5v0.5h-0.5zM530.8 150.8h1.1v1.1h-1.1zM523.5 159.7h0.8v0.8h-0.8zM529.9 163.7h0.9v0.9h-0.9zM530.9 155.5h0.4v0.4h-0.4zM533.7 157.7h1.0v1.0h-1.0zM529.1 161.8h0.5v0.5h-0.5zM523.4 159.9h0.4v0.4h-0.4zM534.0 154.8h0.4v0.4h-0.4zM531.0 153.7h0.4v0.4h-0.4zM524.9 161.9h1.1v1.1h-1.1zM530.5 158.0h1.0v1.0h-1.0zM525.3 153.7h1.2v1.2h-1.2zM527.8 164.9h1.0v1.0h-1.0zM530.7 163.2h0.6v0.6h-0.6zM528.2 162.3h0.4v0.4h-0.4zM532.3 165.9h0.6v0.6h-0.6zM526.2 152.7h1.0v1.0h-1.0zM531.5 166.0h1.0v1.0h-1.0zM538.0 158.0h1.0v1.0h-1.0zM532.8 154.7h0.9v0.9h-0.9zM525.8 163.4h0.4v0.4h-0.4zM526.7 157.2h1.0v1.0h-1.0zM527.1 164.4h1.1v1.1h-1.1zM533.4 156.3h1.1v1.1h-1.1zM531.0 151.8h0.9v0.9h-0.9zM538.3 160.6h0.8v0.8h-0.8zM526.7 159.7h1.0v1.0h-1.0zM532.7 151.1h0.5v0.5h-0.5zM529.1 161.7h0.3v0.3h-0.3zM530.6 159.5h1.0v1.0h-1.0zM531.5 160.5h0.3v0.3h-0.3zM531.0 154.8h0.7v0.7h-0.7zM525.4 162.5h1.2v1.2h-1.2zM528.9 164.3h1.1v1.1h-1.1zM523.7 159.8h0.9v0.9h-0.9zM528.4 165.3h0.8v0.8h-0.8zM536.0 162.2h1.0v1.0h-1.0zM525.7 157.7h0.6v0.6h-0.6zM536.0 153.9h0.4v0.4h-0.4zM528.1 162.0h1.2v1.2h-1.2zM530.3 155.7h1.1v1.1h-1.1zM537.2 159.7h0.7v0.7h-0.7zM530.1 153.2h0.3v0.3h-0.3zM524.0 157.3h1.0v1.0h-1.0zM528.9 161.3h1.0v1.0h-1.0zM532.4 154.8h1.1v1.1h-1.1zM536.5 158.1h0.6v0.6h-0.6zM529.3 150.9h0.4v0.4h-0.4zM529.7 162.7h0.9v0.9h-0.9zM533.5 163.8h0.7v0.7h-0.7zM529.7 155.7h1.2v1.2h-1.2zM537.2 158.4h1.0v1.0h-1.0zM534.3 165.3h0.8v0.8h-0.8zM531.6 150.9h0.6v0.6h-0.6zM534.4 156.7h0.3v0.3h-0.3zM523.6 158.3h1.1v1.1h-1.1zM536.7 156.8h1.1v1.1h-1.1zM528.4 157.3h0.8v0.8h-0.8zM532.9 153.5h0.8v0.8h-0.8zM531.0 162.6h0.6v0.6h-0.6zM525.7 157.9h0.3v0.3h-0.3zM535.9 158.5h0.9v0.9h-0.9zM531.2 154.5h0.5v0.5h-0.5zM527.9 158.0h0.8v0.8h-0.8zM534.2 156.3h0.8v0.8h-0.8zM529.9 151.6h0.9v0.9h-0.9zM530.2 154.3h1.0v1.0h-1.0zM532.8 157.5h1.1v1.1h-1.1zM529.0 159.2h0.3v0.3h-0.3zM533.1 152.1h0.4v0.4h-0.4zM525.0 160.0h1.2v1.2h-1.2zM527.6 164.4h0.5v0.5h-0.5zM532.2 161.4h0.6v0.6h-0.6zM528.0 155.4h0.4v0.4h-0.4zM531.7 160.7h0.4v0.4h-0.4zM528.9 163.6h0.4v0.4h-0.4zM525.9 159.0h1.2v1.2h-1.2zM523.5 159.0h0.7v0.7h-0.7zM533.2 164.2h0.4v0.4h-0.4zM532.3 160.3h0.9v0.9h-0.9zM536.2 157.3h0.6v0.6h-0.6zM527.0 160.5h0.9v0.9h-0.9zM528.8 160.3h1.1v1.1h-1.1zM530.6 158.1h1.1v1.1h-1.1zM530.6 153.7h0.8v0.8h-0.8zM535.6 155.9h0.7v0.7h-0.7zM529.4 164.1h0.9v0.9h-0.9zM530.5 150.6h0.4v0.4h-0.4zM526.3 163.9h1.0v1.0h-1.0zM525.6 154.8h0.6v0.6h-0.6zM536.8 156.4h0.6v0.6h-0.6zM532.3 160.9h1.1v1.1h-1.1zM531.6 157.1h0.6v0.6h-0.6zM525.6 159.1h0.6v0.6h-0.6zM534.9 155.5h0.8v0.8h-0.8zM537.0 155.6h0.7v0.7h-0.7zM528.7 162.7h0.8v0.8h-0.8zM532.1 154.4h0.6v0.6h-0.6zM527.5 161.5h1.1v1.1h-1.1zM527.1 157.4h0.6v0.6h-0.6zM532.6 155.5h0.9v0.9h-0.9zM534.7 158.9h0.3v0.3h-0.3zM532.2 155.5h0.5v0.5h-0.5zM535.0 159.8h0.9v0.9h-0.9zM529.8 150.9h1.1v1.1h-1.1zM523.9 156.0h0.3v0.3h-0.3zM535.9 156.0h0.4v0.4h-0.4zM531.1 151.0h0.6v0.6h-0.6zM537.4 162.5h1.0v1.0h-1.0zM524.7 153.8h0.3v0.3h-0.3zM533.8 159.3h0.3v0.3h-0.3zM529.6 152.2h0.4v0.4h-0.4zM533.0 161.3h0.8v0.8h-0.8zM527.5 151.4h0.6v0.6h-0.6zM536.4 157.7h0.6v0.6h-0.6zM531.1 162.2h1.2v1.2h-1.2zM537.9 158.2h0.4v0.4h-0.4zM532.5 161.2h0.6v0.6h-0.6zM531.0 156.4h0.8v0.8h-0.8zM530.6 157.0h0.7v0.7h-0.7zM532.7 152.5h0.7v0.7h-0.7zM535.8 154.2h0.6v0.6h-0.6zM525.0 163.1h1.1v1.1h-1.1zM536.4 155.3h0.4v0.4h-0.4zM533.4 162.8h0.9v0.9h-0.9zM538.4 158.6h1.0v1.0h-1.0zM530.6 158.3h1.0v1.0h-1.0zM525.6 161.7h0.8v0.8h-0.8zM530.5 153.3h1.2v1.2h-1.2zM538.6 156.2h0.8v0.8h-0.8zM529.2 162.9h0.5v0.5h-0.5zM537.1 154.3h1.0v1.0h-1.0zM534.6 151.2h0.9v0.9h-0.9zM528.3 164.7h0.5v0.5h-0.5zM528.8 156.3h1.1v1.1h-1.1zM527.0 158.7h1.1v1.1h-1.1zM537.9 162.2h1.0v1.0h-1.0zM535.3 164.0h0.8v0.8h-0.8zM536.3 155.0h0.7v0.7h-0.7zM533.4 157.4h1.0v1.0h-1.0zM534.6 160.9h0.4v0.4h-0.4z" fill="#000" opacity="0.85"/>
<path d="M554.9 154.3h0.9v0.9h-0.9zM550.7 165.6h0.9v0.9h-0.9zM555.9 161.8h0.9v0.9h-0.9zM552.5 165.1h0.5v0.5h-0.5zM545.4 164.3h1.1v1.1h-1.1zM556.6 158.3h0.8v0.8h-0.8zM553.7 151.5h0.7v0.7h-0.7zM554.5 154.3h1.2v1.2h-1.2zM548.1 158.9h1.0v1.0h-1.0zM555.3 163.9h0.3v0.3h-0.3zM557.2 157.9h1.0v1.0h-1.0zM555.6 163.4h0.6v0.6h-0.6zM551.0 166.0h0.3v0.3h-0.3zM548.5 158.7h1.1v1.1h-1.1zM552.2 157.4h0.7v0.7h-0.7zM543.9 159.8h0.9v0.9h-0.9zM546.5 165.2h0.4v0.4h-0.4zM556.0 164.2h0.4v0.4h-0.4zM553.4 163.9h0.6v0.6h-0.6zM555.2 165.4h0.7v0.7h-0.7zM551.9 154.2h1.1v1.1h-1.1zM552.5 166.3h0.8v0.8h-0.8zM558.3 157.0h0.8v0.8h-0.8zM543.3 156.8h0.7v0.7h-0.7zM557.6 163.1h1.0v1.0h-1.0zM548.0 151.7h0.5v0.5h-0.5zM543.5 160.1h1.2v1.2h-1.2zM554.0 156.8h0.9v0.9h-0.9zM545.9 156.6h0.4v0.4h-0.4zM554.8 162.8h0.7v0.7h-0.7zM550.4 163.5h0.8v0.8h-0.8zM551.5 151.9h0.4v0.4h-0.4zM554.9 155.0h1.2v1.2h-1.2zM554.2 158.0h0.8v0.8h-0.8zM556.2 157.3h0.8v0.8h-0.8zM550.4 159.7h0.4v0.4h-0.4zM554.2 161.6h0.8v0.8h-0.8zM543.4 155.2h0.9v0.9h-0.9zM545.6 164.7h0.9v0.9h-0.9zM543.4 156.3h0.9v0.9h-0.9zM546.8 163.5h0.5v0.5h-0.5zM555.1 157.6h1.2v1.2h-1.2zM551.8 158.7h0.8v0.8h-0.8zM552.7 164.2h0.4v0.4h-0.4zM554.6 152.4h0.9v0.9h-0.9zM558.6 154.6h0.9v0.9h-0.9zM550.9 158.0h0.3v0.3h-0.3zM543.5 162.1h0.5v0.5h-0.5zM550.3 158.0h0.6v0.6h-0.6zM556.3 154.6h1.0v1.0h-1.0zM554.8 158.7h0.4v0.4h-0.4zM552.3 156.0h1.1v1.1h-1.1zM550.1 166.3h0.7v0.7h-0.7zM547.3 165.9h0.6v0.6h-0.6zM550.3 156.3h1.0v1.0h-1.0zM553.8 158.0h1.0v1.0h-1.0zM550.6 161.6h0.6v0.6h-0.6zM546.6 151.3h1.2v1.2h-1.2zM557.7 158.1h0.9v0.9h-0.9zM554.8 164.5h0.8v0.8h-0.8zM545.9 164.6h0.5v0.5h-0.5zM553.1 161.0h0.4v0.4h-0.4zM544.5 154.4h0.4v0.4h-0.4zM544.6 158.3h0.8v0.8h-0.8zM545.7 161.6h0.3v0.3h-0.3zM556.2 160.3h0.5v0.5h-0.5zM551.2 154.2h1.0v1.0h-1.0zM551.1 161.0h0.7v0.7h-0.7zM547.3 161.6h1.0v1.0h-1.0zM552.2 165.2h1.0v1.0h-1.0zM545.2 160.1h1.1v1.1h-1.1zM548.1 156.2h0.3v0.3h-0.3zM555.3 160.8h0.3v0.3h-0.3zM547.7 153.9h0.5v0.5h-0.5zM542.8 157.7h0.5v0.5h-0.5zM553.6 162.3h0.6v0.6h-0.6zM557.0 154.5h0.7v0.7h-0.7zM551.9 159.9h0.4v0.4h-0.4zM554.9 152.8h0.4v0.4h-0.4zM549.5 156.9h0.7v0.7h-0.7zM549.6 160.7h1.0v1.0h-1.0zM549.7 152.4h0.4v0.4h-0.4zM548.3 153.5h0.9v0.9h-0.9zM557.8 162.8h0.3v0.3h-0.3zM551.9 163.7h0.4v0.4h-0.4zM557.0 162.1h1.2v1.2h-1.2zM548.8 162.2h0.9v0.9h-0.9zM551.9 163.7h0.9v0.9h-0.9zM548.0 159.8h0.3v0.3h-0.3zM542.8 156.1h1.1v1.1h-1.1zM555.9 161.9h0.7v0.7h-0.7zM553.4 164.9h0.7v0.7h-0.7zM552.7 154.1h1.1v1.1h-1.1zM553.3 153.0h0.4v0.4h-0.4zM548.0 158.7h0.9v0.9h-0.9zM548.9 152.3h1.2v1.2h-1.2zM557.9 160.4h1.0v1.0h-1.0zM554.7 161.5h0.3v0.3h-0.3zM544.7 154.8h0.6v0.6h-0.6zM549.3 153.5h0.9v0.9h-0.9zM549.6 166.7h0.7v0.7h-0.7zM553.6 158.4h0.9v0.9h-0.9zM555.5 153.3h0.4v0.4h-0.4zM556.0 153.2h0.4v0.4h-0.4zM545.9 163.1h0.3v0.3h-0.3zM555.9 159.7h1.1v1.1h-1.1zM555.8 158.3h1.1v1.1h-1.1zM552.8 150.7h0.8v0.8h-0.8zM557.7 157.1h1.2v1.2h-1.2zM547.5 156.9h0.7v0.7h-0.7zM546.1 158.9h0.6v0.6h-0.6zM544.5 157.9h0.5v0.5h-0.5zM550.0 164.3h0.7v0.7h-0.7zM545.0 161.8h0.4v0.4h-0.4zM546.6 157.5h1.0v1.0h-1.0zM548.8 151.2h0.7v0.7h-0.7zM551.1 166.6h0.7v0.7h-0.7zM547.8 161.6h0.6v0.6h-0.6zM549.0 150.9h0.7v0.7h-0.7zM550.5 154.5h0.7v0.7h-0.7zM548.0 162.0h0.6v0.6h-0.6zM551.2 151.1h0.4v0.4h-0.4zM551.8 165.9h0.9v0.9h-0.9zM548.0 152.3h0.9v0.9h-0.9zM550.7 160.5h0.6v0.6h-0.6zM559.2 160.1h0.7v0.7h-0.7zM547.0 151.0h1.0v1.0h-1.0zM551.6 163.3h0.4v0.4h-0.4zM553.1 151.4h0.7v0.7h-0.7zM548.0 161.6h0.7v0.7h-0.7zM549.1 150.6h1.1v1.1h-1.1zM554.8 154.2h0.7v0.7h-0.7zM547.7 166.1h0.4v0.4h-0.4zM553.5 162.1h1.1v1.1h-1.1zM553.9 154.5h1.1v1.1h-1.1zM555.3 154.9h0.4v0.4h-0.4zM551.7 153.2h0.4v0.4h-0.4zM555.6 155.1h0.6v0.6h-0.6zM547.5 156.0h0.3v0.3h-0.3zM547.0 161.7h0.3v0.3h-0.3zM545.9 163.7h0.6v0.6h-0.6zM548.1 152.3h0.4v0.4h-0.4zM557.9 159.3h0.8v0.8h-0.8zM550.0 162.0h1.1v1.1h-1.1zM554.5 156.2h0.8v0.8h-0.8zM546.7 156.2h0.3v0.3h-0.3zM547.9 164.4h0.8v0.8h-0.8zM548.0 158.2h0.5v0.5h-0.5zM548.9 163.5h0.6v0.6h-0.6zM553.4 156.7h1.2v1.2h-1.2zM551.5 166.2h0.5v0.5h-0.5zM546.5 155.7h0.3v0.3h-0.3zM553.2 151.0h0.5v0.5h-0.5zM552.0 152.6h1.2v1.2h-1.2zM555.9 160.1h0.5v0.5h-0.5zM545.7 153.1h1.1v1.1h-1.1zM546.0 156.8h1.0v1.0h-1.0zM554.4 161.0h1.0v1.0h-1.0zM543.1 161.5h0.3v0.3h-0.3zM547.2 159.3h0.3v0.3h-0.3zM553.1 159.8h0.6v0.6h-0.6zM545.5 160.9h0.5v0.5h-0.5zM549.2 152.5h1.2v1.2h-1.2zM554.0 163.7h0.7v0.7h-0.7zM545.5 164.1h0.4v0.4h-0.4zM554.7 154.8h0.6v0.6h-0.6zM546.2 154.2h0.5v0.5h-0.5zM558.2 162.6h0.6v0.6h-0.6zM556.2 162.9h0.8v0.8h-0.8zM548.7 162.7h1.1v1.1h-1.1zM548.1 163.0h1.2v1.2h-1.2zM547.5 162.5h0.4v0.4h-0.4zM547.4 152.5h0.7v0.7h-0.7zM547.6 160.7h1.0v1.0h-1.0zM543.5 160.4h0.6v0.6h-0.6zM550.9 156.9h0.5v0.5h-0.5zM557.8 156.7h0.9v0.9h-0.9zM545.2 158.5h0.4v0.4h-0.4zM554.2 164.4h0.9v0.9h-0.9zM550.6 165.2h0.4v0.4h-0.4zM548.3 156.1h0.7v0.7h-0.7zM548.5 164.2h0.4v0.4h-0.4zM544.4 159.1h0.4v0.4h-0.4zM548.5 164.9h0.8v0.8h-0.8zM545.4 153.4h0.8v0.8h-0.8zM552.0 163.9h1.0v1.0h-1.0zM544.3 155.4h0.6v0.6h-0.6zM543.1 161.0h1.0v1.0h-1.0zM549.4 156.1h0.8v0.8h-0.8zM559.0 160.1h1.2v1.2h-1.2zM550.4 154.0h1.1v1.1h-1.1zM554.4 165.3h0.7v0.7h-0.7zM559.0 159.2h0.7v0.7h-0.7zM554.4 152.2h0.8v0.8h-0.8zM553.5 155.5h1.1v1.1h-1.1zM550.3 159.5h0.6v0.6h-0.6zM553.1 159.3h0.8v0.8h-0.8zM553.5 160.7h0.5v0.5h-0.5zM549.5 166.4h1.1v1.1h-1.1zM556.8 152.2h0.7v0.7h-0.7zM552.3 154.1h1.1v1.1h-1.1zM553.7 151.6h0.5v0.5h-0.5zM557.9 162.8h0.8v0.8h-0.8zM545.0 153.3h0.4v0.4h-0.4zM549.2 152.9h1.0v1.0h-1.0zM547.4 159.4h1.2v1.2h-1.2zM549.6 165.6h1.0v1.0h-1.0zM551.1 165.5h0.6v0.6h-0.6zM551.6 162.3h1.2v1.2h-1.2zM546.9 162.8h0.7v0.7h-0.7zM558.3 159.6h1.0v1.0h-1.0zM554.6 154.8h0.4v0.4h-0.4zM546.8 164.3h0.9v0.9h-0.9zM545.9 161.8h0.4v0.4h-0.4zM556.1 155.5h0.7v0.7h-0.7zM551.9 154.7h0.9v0.9h-0.9zM546.4 164.5h0.3v0.3h-0.3zM549.9 165.1h0.7v0.7h-0.7zM546.4 162.9h0.5v0.5h-0.5zM550.7 158.5h1.0v1.0h-1.0zM550.8 166.1h0.8v0.8h-0.8zM545.6 154.4h0.4v0.4h-0.4zM551.8 153.8h1.1v1.1h-1.1zM552.6 151.6h1.0v1.0h-1.0zM544.6 161.1h1.2v1.2h-1.2zM552.0 160.9h0.6v0.6h-0.6zM547.7 158.2h0.5v0.5h-0.5zM554.5 154.4h0.4v0.4h-0.4zM553.6 164.3h0.4v0.4h-0.4zM544.8 159.3h0.7v0.7h-0.7zM543.2 158.2h0.3v0.3h-0.3zM554.4 156.8h0.3v0.3h-0.3zM551.7 152.0h0.8v0.8h-0.8zM552.5 165.7h0.5v0.5h-0.5zM550.4 154.4h0.8v0.8h-0.8zM547.9 154.2h0.7v0.7h-0.7zM557.3 161.1h0.9v0.9h-0.9zM554.6 163.6h0.9v0.9h-0.9zM557.3 163.0h1.1v1.1h-1.1zM555.0 159.7h0.3v0.3h-0.3zM551.0 160.9h0.7v0.7h-0.7zM551.0 163.0h0.7v0.7h-0.7zM545.8 163.8h0.9v0.9h-0.9zM554.0 161.0h0.3v0.3h-0.3zM549.7 160.8h0.9v0.9h-0.9zM552.6 150.0h0.4v0.4h-0.4zM558.2 160.1h0.6v0.6h-0.6zM555.8 156.1h0.5v0.5h-0.5zM558.4 162.0h0.7v0.7h-0.7zM545.8 160.4h1.0v1.0h-1.0zM553.9 153.3h0.4v0.4h-0.4zM544.3 162.8h0.6v0.6h-0.6zM547.6 153.0h0.7v0.7h-0.7zM547.2 156.5h0.8v0.8h-0.8zM552.6 156.6h0.6v0.6h-0.6zM557.2 152.6h0.3v0.3h-0.3zM546.3 153.5h1.1v1.1h-1.1zM548.0 159.0h0.5v0.5h-0.5zM549.3 151.3h0.4v0.4h-0.4zM546.7 153.0h0.9v0.9h-0.9zM556.6 159.1h0.6v0.6h-0.6zM547.0 155.5h0.4v0.4h-0.4zM548.8 154.4h1.0v1.0h-1.0zM548.8 164.3h1.0v1.0h-1.0zM556.4 163.2h0.3v0.3h-0.3zM552.2 157.8h0.9v0.9h-0.9zM548.6 161.0h0.6v0.6h-0.6zM545.5 158.3h0.4v0.4h-0.4zM546.4 157.7h1.2v1.2h-1.2zM546.8 162.1h0.5v0.5h-0.5z" fill="#000" opacity="0.85"/>
<circle cx="571.3" cy="158.4" r="7.900" fill="#0a0a0a"/>
<path d="M572.7 155.8h0.7v0.7h-0.7zM571.3 153.4h0.7v0.7h-0.7zM569.3 158.2h0.3v0.3h-0.3zM564.7 158.0h0.4v0.4h-0.4zM565.1 158.1h0.4v0.4h-0.4zM571.9 159.6h0.5v0.5h-0.5zM574.4 154.4h0.4v0.4h-0.4zM566.3 155.1h0.3v0.3h-0.3zM564.7 158.2h0.4v0.4h-0.4zM565.6 154.0h0.3v0.3h-0.3zM571.2 155.5h0.4v0.4h-0.4zM569.4 155.6h0.5v0.5h-0.5zM572.2 159.1h0.3v0.3h-0.3zM571.1 158.5h0.3v0.3h-0.3zM571.6 157.7h0.6v0.6h-0.6zM572.8 160.2h0.5v0.5h-0.5zM569.6 159.1h0.8v0.8h-0.8zM574.1 157.8h0.3v0.3h-0.3zM572.9 155.2h0.6v0.6h-0.6zM570.7 155.1h0.3v0.3h-0.3zM568.1 152.4h0.7v0.7h-0.7zM568.9 160.2h0.4v0.4h-0.4zM566.9 157.5h0.6v0.6h-0.6zM568.7 159.1h0.7v0.7h-0.7zM573.8 158.9h0.6v0.6h-0.6zM569.8 158.2h0.6v0.6h-0.6zM564.9 156.3h0.5v0.5h-0.5zM565.2 159.1h0.4v0.4h-0.4zM574.8 155.8h0.9v0.9h-0.9zM572.2 155.4h0.8v0.8h-0.8zM567.7 154.8h0.9v0.9h-0.9zM566.6 152.4h0.6v0.6h-0.6zM574.1 158.8h0.4v0.4h-0.4zM569.4 160.7h0.4v0.4h-0.4zM565.1 157.5h0.3v0.3h-0.3zM568.7 154.9h0.6v0.6h-0.6zM566.9 152.7h0.3v0.3h-0.3zM571.5 161.4h0.5v0.5h-0.5zM566.6 157.9h0.7v0.7h-0.7zM569.3 151.9h0.5v0.5h-0.5z" fill="#fff" opacity="0.85"/>
<path d="M566.4 156.1h0.3v0.3h-0.3zM578.3 156.1h0.5v0.5h-0.5zM576.4 158.1h0.5v0.5h-0.5zM571.7 164.8h0.5v0.5h-0.5zM577.6 155.8h0.6v0.6h-0.6zM570.6 165.0h0.4v0.4h-0.4zM569.6 162.6h0.5v0.5h-0.5zM575.1 152.6h0.5v0.5h-0.5zM572.7 161.0h0.4v0.4h-0.4zM572.3 162.6h0.3v0.3h-0.3zM574.9 163.6h0.3v0.3h-0.3zM573.8 154.9h0.5v0.5h-0.5zM570.0 162.0h0.4v0.4h-0.4zM576.2 158.8h0.4v0.4h-0.4zM578.2 158.9h0.4v0.4h-0.4zM578.6 158.4h0.3v0.3h-0.3zM571.3 159.5h0.3v0.3h-0.3zM569.9 152.8h0.4v0.4h-0.4zM571.4 162.4h0.6v0.6h-0.6zM566.1 163.7h0.6v0.6h-0.6zM576.2 163.2h0.3v0.3h-0.3zM569.7 151.8h0.5v0.5h-0.5zM564.9 156.3h0.3v0.3h-0.3zM567.6 157.4h0.4v0.4h-0.4zM573.6 164.3h0.5v0.5h-0.5z" fill="#fff" opacity="0.6"/>
<path d="M492.6 182.1h0.9v0.9h-0.9zM497.6 177.3h0.3v0.3h-0.3zM497.7 179.7h0.8v0.8h-0.8zM490.3 178.1h0.9v0.9h-0.9zM492.9 181.1h0.5v0.5h-0.5zM485.4 175.2h0.7v0.7h-0.7zM498.6 177.9h0.9v0.9h-0.9zM498.3 175.6h0.3v0.3h-0.3zM490.8 177.6h1.1v1.1h-1.1zM495.4 179.2h0.5v0.5h-0.5zM489.5 179.7h0.7v0.7h-0.7zM498.6 175.8h0.5v0.5h-0.5zM484.3 177.7h1.0v1.0h-1.0zM496.2 179.2h0.7v0.7h-0.7zM487.5 179.5h0.3v0.3h-0.3zM491.0 177.6h0.3v0.3h-0.3zM492.6 175.0h0.8v0.8h-0.8zM495.0 174.4h1.0v1.0h-1.0zM497.5 181.3h1.0v1.0h-1.0zM489.3 176.6h0.9v0.9h-0.9zM491.8 182.2h0.7v0.7h-0.7zM498.6 174.3h0.6v0.6h-0.6zM498.2 179.5h0.7v0.7h-0.7zM494.2 182.4h0.3v0.3h-0.3zM484.4 181.0h0.3v0.3h-0.3zM487.1 177.4h0.4v0.4h-0.4zM492.7 176.9h0.7v0.7h-0.7zM498.0 176.2h0.7v0.7h-0.7zM495.7 175.6h0.7v0.7h-0.7zM483.8 176.4h0.7v0.7h-0.7zM496.3 177.5h0.7v0.7h-0.7zM488.5 175.4h0.4v0.4h-0.4zM492.3 175.1h0.9v0.9h-0.9zM496.0 181.3h0.4v0.4h-0.4zM487.0 174.0h1.0v1.0h-1.0zM495.1 180.8h0.8v0.8h-0.8zM488.5 181.4h1.0v1.0h-1.0zM493.9 181.5h0.7v0.7h-0.7zM491.8 175.2h1.0v1.0h-1.0zM494.1 180.0h0.4v0.4h-0.4zM488.2 174.9h0.5v0.5h-0.5zM495.9 175.4h0.3v0.3h-0.3zM486.0 174.7h0.9v0.9h-0.9zM484.8 176.2h0.8v0.8h-0.8zM490.3 174.3h0.5v0.5h-0.5zM494.4 180.9h0.7v0.7h-0.7zM489.4 176.6h0.5v0.5h-0.5zM488.4 176.5h1.0v1.0h-1.0zM489.3 182.1h1.0v1.0h-1.0zM496.6 176.3h0.5v0.5h-0.5zM495.2 175.4h0.6v0.6h-0.6zM489.3 181.4h1.0v1.0h-1.0zM493.2 180.5h1.0v1.0h-1.0zM491.3 176.6h0.6v0.6h-0.6zM497.3 182.2h0.7v0.7h-0.7zM497.5 179.7h1.0v1.0h-1.0zM483.9 181.5h0.9v0.9h-0.9zM486.7 180.7h0.6v0.6h-0.6zM495.7 180.5h0.3v0.3h-0.3zM489.2 177.7h0.7v0.7h-0.7zM493.1 177.2h0.3v0.3h-0.3zM492.4 178.0h1.1v1.1h-1.1zM489.9 175.5h1.0v1.0h-1.0zM490.0 176.2h0.5v0.5h-0.5zM498.4 179.0h0.4v0.4h-0.4zM488.8 180.9h1.0v1.0h-1.0zM490.2 178.8h0.7v0.7h-0.7zM493.6 180.1h0.6v0.6h-0.6zM488.1 174.6h0.7v0.7h-0.7zM484.2 178.3h0.3v0.3h-0.3zM487.7 177.9h0.4v0.4h-0.4zM495.9 178.0h0.9v0.9h-0.9zM492.6 179.8h0.6v0.6h-0.6zM498.3 179.9h0.7v0.7h-0.7zM488.6 176.1h1.0v1.0h-1.0zM496.7 180.9h0.9v0.9h-0.9zM494.2 176.6h0.9v0.9h-0.9zM492.2 181.2h1.1v1.1h-1.1zM483.7 181.8h0.3v0.3h-0.3zM495.2 176.8h0.4v0.4h-0.4zM495.0 178.3h0.3v0.3h-0.3zM490.7 174.0h0.5v0.5h-0.5zM493.2 177.9h0.9v0.9h-0.9zM491.6 179.3h0.9v0.9h-0.9zM488.7 174.9h0.5v0.5h-0.5zM486.1 180.5h0.3v0.3h-0.3zM485.0 176.2h0.7v0.7h-0.7zM497.8 176.5h0.9v0.9h-0.9zM487.4 182.4h1.1v1.1h-1.1zM488.4 175.8h0.6v0.6h-0.6zM496.2 176.7h0.3v0.3h-0.3zM486.7 175.0h0.6v0.6h-0.6zM487.3 179.1h0.6v0.6h-0.6zM495.3 180.4h0.5v0.5h-0.5zM492.0 178.2h0.5v0.5h-0.5zM492.7 174.9h1.0v1.0h-1.0zM494.1 176.1h0.7v0.7h-0.7zM491.1 179.9h0.4v0.4h-0.4zM498.4 175.7h0.9v0.9h-0.9zM485.3 175.3h0.7v0.7h-0.7zM485.0 179.5h1.0v1.0h-1.0zM495.1 178.2h1.0v1.0h-1.0zM498.1 177.0h1.1v1.1h-1.1zM491.8 182.3h0.3v0.3h-0.3zM494.9 179.3h0.3v0.3h-0.3zM495.4 180.4h0.5v0.5h-0.5zM494.9 174.4h1.0v1.0h-1.0zM490.7 181.2h0.5v0.5h-0.5zM490.9 174.7h1.0v1.0h-1.0zM498.3 182.4h1.1v1.1h-1.1zM494.6 179.4h0.3v0.3h-0.3zM492.5 181.2h0.5v0.5h-0.5zM487.6 174.4h0.4v0.4h-0.4zM486.7 175.3h1.0v1.0h-1.0zM485.5 177.7h1.1v1.1h-1.1zM484.4 182.8h0.3v0.3h-0.3zM494.6 174.4h0.8v0.8h-0.8zM485.7 178.5h0.9v0.9h-0.9zM489.9 176.4h0.5v0.5h-0.5zM492.2 181.9h0.7v0.7h-0.7zM486.8 174.2h0.5v0.5h-0.5zM489.9 174.3h1.0v1.0h-1.0zM494.1 180.5h0.9v0.9h-0.9zM486.6 178.9h0.8v0.8h-0.8zM488.7 181.3h0.9v0.9h-0.9zM486.7 175.0h0.9v0.9h-0.9zM495.3 178.6h0.7v0.7h-0.7zM493.5 179.2h0.7v0.7h-0.7zM485.5 177.8h0.6v0.6h-0.6zM489.0 177.5h0.6v0.6h-0.6zM484.9 174.2h0.9v0.9h-0.9zM492.5 177.3h0.5v0.5h-0.5zM497.8 176.5h0.6v0.6h-0.6zM497.1 181.4h0.5v0.5h-0.5zM495.6 178.2h0.6v0.6h-0.6zM496.6 181.6h0.3v0.3h-0.3zM494.4 178.1h0.4v0.4h-0.4zM484.5 181.1h0.8v0.8h-0.8zM497.7 179.5h0.3v0.3h-0.3zM487.3 182.2h0.9v0.9h-0.9zM488.7 179.1h0.5v0.5h-0.5zM486.3 180.4h0.5v0.5h-0.5zM488.5 179.4h0.3v0.3h-0.3zM493.2 177.0h0.3v0.3h-0.3zM486.1 176.7h0.8v0.8h-0.8zM487.4 179.2h0.5v0.5h-0.5zM487.5 177.9h1.0v1.0h-1.0zM485.5 175.9h0.5v0.5h-0.5zM489.6 178.2h0.6v0.6h-0.6zM490.0 182.1h0.5v0.5h-0.5zM493.9 177.4h0.5v0.5h-0.5zM489.0 180.2h0.6v0.6h-0.6zM486.2 177.0h0.8v0.8h-0.8zM494.3 177.8h0.3v0.3h-0.3zM496.0 178.9h0.5v0.5h-0.5zM487.8 177.1h0.9v0.9h-0.9zM497.0 179.8h0.3v0.3h-0.3zM487.4 178.7h0.9v0.9h-0.9zM487.2 182.7h0.9v0.9h-0.9zM498.4 176.3h1.0v1.0h-1.0zM488.9 181.9h0.5v0.5h-0.5zM495.7 182.6h0.8v0.8h-0.8zM487.6 174.8h1.1v1.1h-1.1zM488.8 175.7h0.6v0.6h-0.6zM486.0 179.6h0.8v0.8h-0.8zM496.8 175.0h0.4v0.4h-0.4zM490.7 178.9h0.9v0.9h-0.9zM484.1 181.3h0.3v0.3h-0.3zM492.7 180.9h0.4v0.4h-0.4zM494.0 175.0h0.8v0.8h-0.8zM485.9 179.8h0.5v0.5h-0.5zM489.6 175.1h0.6v0.6h-0.6zM489.6 181.1h0.3v0.3h-0.3zM496.6 182.1h0.9v0.9h-0.9zM492.2 175.1h0.5v0.5h-0.5zM488.4 177.6h0.7v0.7h-0.7zM495.6 181.0h1.0v1.0h-1.0zM495.1 180.1h0.6v0.6h-0.6zM496.1 178.1h0.9v0.9h-0.9zM491.3 180.6h1.0v1.0h-1.0zM489.6 181.6h0.9v0.9h-0.9zM487.7 181.8h0.9v0.9h-0.9zM486.5 182.5h0.3v0.3h-0.3zM491.9 178.8h0.6v0.6h-0.6zM497.5 174.9h0.4v0.4h-0.4zM495.8 180.1h1.0v1.0h-1.0zM487.1 180.9h0.4v0.4h-0.4zM485.9 178.7h1.0v1.0h-1.0zM490.8 176.5h1.1v1.1h-1.1zM488.1 180.5h0.7v0.7h-0.7zM496.9 180.1h0.6v0.6h-0.6zM491.5 182.5h0.3v0.3h-0.3zM490.9 181.5h0.4v0.4h-0.4zM496.0 177.3h1.1v1.1h-1.1zM485.4 174.7h0.7v0.7h-0.7zM490.3 174.7h1.0v1.0h-1.0zM490.3 176.7h0.8v0.8h-0.8zM498.0 180.4h1.0v1.0h-1.0zM488.8 175.1h0.6v0.6h-0.6zM498.1 176.0h0.4v0.4h-0.4zM484.4 178.7h0.5v0.5h-0.5zM492.6 176.7h0.9v0.9h-0.9zM490.7 178.1h0.5v0.5h-0.5zM492.9 175.7h1.0v1.0h-1.0zM495.9 178.3h0.4v0.4h-0.4zM498.5 175.0h0.3v0.3h-0.3zM492.6 175.0h1.0v1.0h-1.0zM488.5 176.7h0.4v0.4h-0.4zM496.0 174.6h0.7v0.7h-0.7zM497.7 174.9h0.6v0.6h-0.6zM498.0 176.3h0.3v0.3h-0.3zM492.0 177.2h0.7v0.7h-0.7zM496.8 176.3h0.9v0.9h-0.9zM497.9 176.3h0.6v0.6h-0.6zM494.3 179.8h0.3v0.3h-0.3zM494.1 177.1h0.4v0.4h-0.4zM495.7 178.1h0.9v0.9h-0.9zM491.6 176.4h0.7v0.7h-0.7zM493.7 181.4h0.6v0.6h-0.6zM486.5 181.6h0.3v0.3h-0.3zM485.7 182.1h0.6v0.6h-0.6zM492.5 177.8h0.3v0.3h-0.3zM485.5 176.3h0.9v0.9h-0.9zM486.2 174.1h0.9v0.9h-0.9zM483.8 177.8h0.5v0.5h-0.5zM486.7 174.7h0.8v0.8h-0.8zM490.2 182.7h0.5v0.5h-0.5zM486.0 177.6h0.8v0.8h-0.8zM486.3 174.9h0.8v0.8h-0.8zM485.1 180.6h0.8v0.8h-0.8z" fill="#000" opacity="0.85"/>
<path d="M512.3 179.8h0.6v0.6h-0.6zM512.2 177.0h0.4v0.4h-0.4zM516.0 181.9h0.7v0.7h-0.7zM512.5 179.7h0.4v0.4h-0.4zM509.4 181.4h0.6v0.6h-0.6zM506.9 176.3h1.0v1.0h-1.0zM510.5 179.7h0.7v0.7h-0.7zM504.2 173.9h0.3v0.3h-0.3zM511.1 178.8h0.4v0.4h-0.4zM516.9 176.4h0.7v0.7h-0.7zM514.5 173.4h0.4v0.4h-0.4zM510.8 173.6h0.5v0.5h-0.5zM505.6 180.0h0.5v0.5h-0.5zM510.0 181.8h0.9v0.9h-0.9zM513.4 174.5h0.3v0.3h-0.3zM512.5 176.0h0.5v0.5h-0.5zM504.5 176.3h0.5v0.5h-0.5zM516.1 180.3h0.3v0.3h-0.3zM513.8 180.3h0.8v0.8h-0.8zM504.4 174.1h0.9v0.9h-0.9zM507.3 180.7h0.3v0.3h-0.3zM517.2 176.9h0.8v0.8h-0.8zM517.2 180.0h0.9v0.9h-0.9zM514.1 175.3h0.5v0.5h-0.5zM505.0 177.1h0.3v0.3h-0.3zM513.5 177.8h0.8v0.8h-0.8zM514.0 179.4h0.9v0.9h-0.9zM513.9 178.3h0.6v0.6h-0.6zM505.5 176.0h0.3v0.3h-0.3zM513.9 178.6h0.4v0.4h-0.4zM512.4 175.3h0.7v0.7h-0.7zM506.2 180.8h0.7v0.7h-0.7zM507.7 177.7h0.3v0.3h-0.3zM510.6 181.1h0.7v0.7h-0.7zM514.6 176.5h0.3v0.3h-0.3zM505.9 174.3h0.4v0.4h-0.4zM504.5 177.6h0.3v0.3h-0.3zM506.9 173.4h0.4v0.4h-0.4zM509.7 176.4h0.5v0.5h-0.5zM513.9 177.6h0.3v0.3h-0.3zM510.2 175.1h0.9v0.9h-0.9zM510.8 178.2h0.3v0.3h-0.3zM513.1 178.7h0.7v0.7h-0.7zM504.4 180.5h0.9v0.9h-0.9zM514.4 174.8h0.5v0.5h-0.5zM515.0 180.5h0.5v0.5h-0.5zM511.8 179.1h0.4v0.4h-0.4zM514.7 174.9h0.4v0.4h-0.4zM512.6 177.8h0.9v0.9h-0.9zM511.3 174.8h0.4v0.4h-0.4zM508.8 180.9h0.7v0.7h-0.7zM512.0 177.9h0.3v0.3h-0.3zM512.1 174.0h0.8v0.8h-0.8zM511.2 176.3h1.0v1.0h-1.0zM511.3 180.5h1.0v1.0h-1.0zM513.7 178.8h1.0v1.0h-1.0zM507.1 178.2h0.6v0.6h-0.6zM507.1 179.4h0.6v0.6h-0.6zM513.8 181.8h1.0v1.0h-1.0zM513.0 177.6h1.0v1.0h-1.0zM504.5 177.4h0.6v0.6h-0.6zM510.6 173.9h0.4v0.4h-0.4zM510.8 177.9h0.5v0.5h-0.5zM511.6 181.7h0.5v0.5h-0.5zM514.0 177.6h0.8v0.8h-0.8zM506.9 176.5h0.5v0.5h-0.5zM510.0 178.3h1.0v1.0h-1.0zM515.1 176.2h0.3v0.3h-0.3zM511.9 173.9h0.8v0.8h-0.8zM507.9 181.2h0.5v0.5h-0.5zM507.1 175.7h0.6v0.6h-0.6zM507.0 180.2h0.3v0.3h-0.3zM513.6 180.1h0.3v0.3h-0.3zM514.9 177.4h0.9v0.9h-0.9zM506.2 177.6h0.3v0.3h-0.3zM511.8 180.7h0.4v0.4h-0.4zM505.6 175.6h0.9v0.9h-0.9zM512.2 180.7h1.0v1.0h-1.0zM515.7 174.7h0.4v0.4h-0.4zM511.9 177.3h0.6v0.6h-0.6zM511.3 176.0h0.9v0.9h-0.9zM517.2 173.9h0.5v0.5h-0.5zM514.0 181.1h0.4v0.4h-0.4zM515.9 177.2h0.3v0.3h-0.3zM514.6 174.9h0.5v0.5h-0.5zM512.3 174.2h0.8v0.8h-0.8zM507.1 180.9h0.4v0.4h-0.4zM505.2 176.7h1.0v1.0h-1.0zM504.7 177.8h0.7v0.7h-0.7zM510.1 176.1h0.9v0.9h-0.9zM505.6 173.8h0.4v0.4h-0.4zM517.0 180.8h0.3v0.3h-0.3zM510.4 181.9h0.7v0.7h-0.7zM505.9 178.6h0.7v0.7h-0.7zM504.3 181.7h0.4v0.4h-0.4zM505.7 180.1h0.9v0.9h-0.9zM504.3 178.5h0.7v0.7h-0.7zM505.7 175.2h0.7v0.7h-0.7zM507.5 180.2h0.7v0.7h-0.7zM511.9 175.4h0.7v0.7h-0.7zM509.9 178.3h1.0v1.0h-1.0zM511.9 176.1h0.6v0.6h-0.6zM510.9 176.0h0.7v0.7h-0.7zM512.5 175.8h0.4v0.4h-0.4zM507.1 179.9h0.6v0.6h-0.6zM515.2 181.1h1.0v1.0h-1.0zM512.5 173.5h0.9v0.9h-0.9zM510.0 179.2h0.4v0.4h-0.4zM513.2 178.4h0.3v0.3h-0.3zM504.6 178.8h0.7v0.7h-0.7zM516.3 177.4h0.6v0.6h-0.6zM516.6 177.5h0.3v0.3h-0.3zM512.4 177.7h0.6v0.6h-0.6zM505.4 173.6h0.8v0.8h-0.8zM510.8 173.6h0.6v0.6h-0.6zM504.8 174.4h0.9v0.9h-0.9zM513.5 181.3h0.9v0.9h-0.9zM505.4 177.3h0.9v0.9h-0.9zM515.6 179.4h0.3v0.3h-0.3zM516.8 178.6h0.9v0.9h-0.9zM506.6 176.2h0.4v0.4h-0.4zM512.9 178.9h0.9v0.9h-0.9zM515.7 178.0h1.0v1.0h-1.0zM513.5 174.8h1.0v1.0h-1.0zM510.7 176.1h0.7v0.7h-0.7zM507.8 176.9h0.8v0.8h-0.8zM510.6 179.0h0.3v0.3h-0.3zM507.7 180.0h0.5v0.5h-0.5zM515.7 180.0h0.3v0.3h-0.3zM510.6 179.0h0.6v0.6h-0.6zM505.9 176.0h0.9v0.9h-0.9zM513.6 177.6h0.5v0.5h-0.5zM508.8 173.7h1.0v1.0h-1.0zM506.3 180.7h0.5v0.5h-0.5zM512.2 179.7h0.5v0.5h-0.5zM514.2 180.5h0.4v0.4h-0.4zM505.2 180.8h0.8v0.8h-0.8zM515.8 173.9h0.5v0.5h-0.5zM510.8 175.6h0.4v0.4h-0.4zM516.6 181.1h1.0v1.0h-1.0zM505.6 176.4h0.3v0.3h-0.3zM514.3 176.5h0.5v0.5h-0.5zM515.4 180.7h0.3v0.3h-0.3zM509.3 177.0h0.7v0.7h-0.7zM516.0 176.1h0.3v0.3h-0.3zM512.8 174.0h0.3v0.3h-0.3zM510.4 181.7h0.4v0.4h-0.4zM511.6 179.7h0.4v0.4h-0.4zM515.1 180.1h1.0v1.0h-1.0zM515.1 180.3h0.7v0.7h-0.7zM508.7 176.1h0.9v0.9h-0.9zM517.3 173.8h0.3v0.3h-0.3zM516.7 176.4h0.5v0.5h-0.5zM512.5 177.1h0.6v0.6h-0.6zM511.1 177.4h0.4v0.4h-0.4zM514.7 177.0h0.3v0.3h-0.3zM515.9 173.7h0.7v0.7h-0.7zM509.8 179.8h0.6v0.6h-0.6zM511.1 175.7h1.0v1.0h-1.0zM511.4 176.3h0.8v0.8h-0.8zM509.0 181.3h0.5v0.5h-0.5zM511.2 175.7h0.8v0.8h-0.8zM508.0 177.3h0.7v0.7h-0.7zM509.9 174.1h0.3v0.3h-0.3zM506.6 179.0h0.5v0.5h-0.5zM507.4 174.9h0.4v0.4h-0.4zM507.5 180.3h0.8v0.8h-0.8zM512.9 177.1h0.3v0.3h-0.3zM509.1 178.8h0.3v0.3h-0.3zM509.1 176.5h0.6v0.6h-0.6zM505.9 179.2h0.6v0.6h-0.6zM515.7 181.4h0.9v0.9h-0.9zM517.1 180.8h0.7v0.7h-0.7zM509.8 174.6h0.7v0.7h-0.7zM515.7 178.3h0.9v0.9h-0.9zM507.9 180.5h0.4v0.4h-0.4zM508.5 174.0h0.6v0.6h-0.6zM506.9 174.9h0.5v0.5h-0.5zM512.6 173.6h0.3v0.3h-0.3zM505.7 177.4h1.0v1.0h-1.0z" fill="#000" opacity="0.7"/>
<path d="M530.0 180.1h0.5v0.5h-0.5zM532.0 178.9h0.4v0.4h-0.4zM530.5 180.8h0.6v0.6h-0.6zM529.9 180.9h0.3v0.3h-0.3zM531.6 178.1h0.5v0.5h-0.5zM530.9 177.2h0.5v0.5h-0.5zM529.6 172.3h0.5v0.5h-0.5zM532.0 177.7h0.6v0.6h-0.6zM531.9 178.7h0.3v0.3h-0.3zM530.4 178.2h0.3v0.3h-0.3zM530.5 174.1h0.5v0.5h-0.5zM530.4 171.6h0.6v0.6h-0.6zM529.5 181.8h0.6v0.6h-0.6zM530.0 174.5h0.7v0.7h-0.7zM531.6 175.6h0.6v0.6h-0.6zM531.3 172.2h0.4v0.4h-0.4zM531.0 171.7h0.6v0.6h-0.6zM530.8 177.3h0.3v0.3h-0.3zM531.0 175.0h0.4v0.4h-0.4zM531.6 182.0h0.4v0.4h-0.4zM529.6 173.4h0.5v0.5h-0.5zM529.9 176.1h0.6v0.6h-0.6zM531.8 181.8h0.6v0.6h-0.6zM530.1 176.3h0.3v0.3h-0.3zM529.2 175.2h0.3v0.3h-0.3zM530.7 171.1h0.6v0.6h-0.6zM531.0 180.8h0.6v0.6h-0.6zM529.8 178.6h0.4v0.4h-0.4zM530.1 178.7h0.6v0.6h-0.6zM530.0 181.3h0.3v0.3h-0.3zM531.4 176.2h0.7v0.7h-0.7zM530.8 178.4h0.3v0.3h-0.3zM531.1 174.4h0.4v0.4h-0.4zM530.2 177.0h0.7v0.7h-0.7zM530.0 178.3h0.3v0.3h-0.3zM529.9 176.6h0.5v0.5h-0.5zM530.2 183.0h0.7v0.7h-0.7zM530.3 175.7h0.6v0.6h-0.6zM530.8 175.6h0.4v0.4h-0.4zM529.4 178.5h0.6v0.6h-0.6zM530.8 173.3h0.4v0.4h-0.4zM529.6 178.0h0.3v0.3h-0.3zM530.9 175.1h0.6v0.6h-0.6zM531.8 176.6h0.3v0.3h-0.3zM531.1 176.5h0.6v0.6h-0.6zM531.1 180.5h0.3v0.3h-0.3zM530.5 178.6h0.4v0.4h-0.4zM530.6 170.9h0.6v0.6h-0.6zM531.5 184.3h0.5v0.5h-0.5zM530.2 176.7h0.3v0.3h-0.3z" fill="#000" opacity="0.6"/>
<path d="M551.9 182.4h0.7v0.7h-0.7zM546.3 176.6h0.8v0.8h-0.8zM545.9 178.2h0.7v0.7h-0.7zM545.3 181.5h0.3v0.3h-0.3zM549.1 181.8h0.7v0.7h-0.7zM545.4 177.1h0.6v0.6h-0.6zM546.2 179.0h0.6v0.6h-0.6zM550.0 182.3h0.4v0.4h-0.4zM551.0 183.6h0.8v0.8h-0.8zM550.0 175.2h0.3v0.3h-0.3zM553.9 177.0h0.6v0.6h-0.6zM545.6 178.6h0.8v0.8h-0.8zM548.7 177.0h0.8v0.8h-0.8zM547.9 184.4h0.8v0.8h-0.8zM554.9 180.4h0.8v0.8h-0.8zM548.0 173.6h0.8v0.8h-0.8zM557.2 178.2h0.7v0.7h-0.7zM548.3 175.1h0.6v0.6h-0.6zM551.2 182.2h0.8v0.8h-0.8zM548.5 173.6h0.6v0.6h-0.6zM550.0 178.0h0.9v0.9h-0.9zM551.2 181.3h0.4v0.4h-0.4zM551.0 177.2h0.8v0.8h-0.8zM553.3 175.5h0.5v0.5h-0.5zM543.8 180.3h0.7v0.7h-0.7zM550.6 178.7h0.3v0.3h-0.3zM552.3 174.9h0.7v0.7h-0.7zM552.1 182.6h0.6v0.6h-0.6zM556.8 181.5h0.6v0.6h-0.6zM549.2 175.9h0.5v0.5h-0.5zM550.1 175.0h0.4v0.4h-0.4zM549.7 178.5h0.5v0.5h-0.5zM553.5 181.6h0.7v0.7h-0.7zM551.4 175.1h0.9v0.9h-0.9zM546.2 175.1h0.4v0.4h-0.4zM553.7 177.5h0.5v0.5h-0.5zM546.2 173.2h0.4v0.4h-0.4zM556.1 178.1h0.8v0.8h-0.8zM555.2 181.9h0.8v0.8h-0.8zM549.5 177.1h0.4v0.4h-0.4zM547.1 176.1h0.6v0.6h-0.6zM545.7 175.8h0.4v0.4h-0.4zM551.4 180.7h0.8v0.8h-0.8zM553.9 181.7h0.8v0.8h-0.8zM556.1 177.7h0.3v0.3h-0.3zM550.3 181.3h0.4v0.4h-0.4zM546.1 179.1h0.3v0.3h-0.3zM549.6 179.6h0.3v0.3h-0.3zM551.7 174.7h0.8v0.8h-0.8zM552.9 174.9h0.8v0.8h-0.8zM552.0 179.3h0.4v0.4h-0.4zM553.8 176.6h0.3v0.3h-0.3zM548.6 176.4h0.7v0.7h-0.7zM550.7 181.8h0.8v0.8h-0.8zM546.2 174.4h0.3v0.3h-0.3zM554.8 174.9h0.6v0.6h-0.6zM544.3 178.7h0.4v0.4h-0.4zM548.2 178.2h0.6v0.6h-0.6zM553.5 175.4h0.6v0.6h-0.6zM546.0 176.2h0.6v0.6h-0.6zM547.9 173.1h0.8v0.8h-0.8zM549.5 176.8h0.5v0.5h-0.5zM547.8 181.3h0.9v0.9h-0.9zM549.8 174.3h0.9v0.9h-0.9zM554.1 183.7h0.5v0.5h-0.5zM554.1 175.1h0.3v0.3h-0.3zM551.7 175.1h0.6v0.6h-0.6zM549.2 171.2h0.7v0.7h-0.7zM551.5 180.6h0.4v0.4h-0.4zM548.8 180.5h0.3v0.3h-0.3z" fill="#000" opacity="0.6"/>
<path d="M569.0 176.1h0.7v0.7h-0.7zM570.5 179.3h0.7v0.7h-0.7zM573.3 176.7h0.7v0.7h-0.7zM575.5 183.1h0.6v0.6h-0.6zM574.3 179.3h0.9v0.9h-0.9zM573.4 180.8h0.9v0.9h-0.9zM571.0 172.7h0.4v0.4h-0.4zM571.2 179.5h0.3v0.3h-0.3zM572.5 181.1h0.8v0.8h-0.8zM570.0 182.4h0.3v0.3h-0.3zM567.8 180.8h0.8v0.8h-0.8zM565.9 177.2h0.3v0.3h-0.3zM575.8 181.1h0.7v0.7h-0.7zM572.0 180.6h0.8v0.8h-0.8zM570.2 176.1h0.3v0.3h-0.3zM567.2 179.1h0.7v0.7h-0.7zM570.3 176.9h0.7v0.7h-0.7zM570.8 177.8h0.8v0.8h-0.8zM567.7 181.7h0.9v0.9h-0.9zM567.7 174.7h0.6v0.6h-0.6zM575.7 179.2h0.5v0.5h-0.5zM568.9 179.8h0.7v0.7h-0.7zM575.3 175.5h0.3v0.3h-0.3zM564.2 177.9h0.5v0.5h-0.5zM574.6 183.4h0.7v0.7h-0.7zM569.8 180.0h0.5v0.5h-0.5zM576.1 175.1h0.6v0.6h-0.6zM571.2 175.8h0.6v0.6h-0.6zM569.3 177.4h0.7v0.7h-0.7zM570.4 174.8h0.6v0.6h-0.6zM571.9 173.0h0.3v0.3h-0.3zM571.2 177.8h0.6v0.6h-0.6zM575.4 180.2h0.8v0.8h-0.8zM576.2 180.6h0.3v0.3h-0.3zM575.7 175.5h0.4v0.4h-0.4zM572.9 180.3h0.7v0.7h-0.7zM577.2 176.4h0.5v0.5h-0.5zM571.1 178.4h0.3v0.3h-0.3zM574.1 181.1h0.4v0.4h-0.4zM567.8 178.0h0.3v0.3h-0.3zM569.7 176.2h0.6v0.6h-0.6zM567.8 181.1h0.4v0.4h-0.4zM576.9 180.8h0.8v0.8h-0.8zM574.5 180.7h0.9v0.9h-0.9zM569.9 175.0h0.5v0.5h-0.5zM566.8 177.8h0.3v0.3h-0.3zM565.6 180.8h0.6v0.6h-0.6zM571.3 172.8h0.5v0.5h-0.5zM570.3 175.9h0.3v0.3h-0.3zM572.0 180.3h0.7v0.7h-0.7zM575.7 178.9h0.9v0.9h-0.9zM577.3 176.8h0.9v0.9h-0.9zM567.0 179.5h0.8v0.8h-0.8zM568.4 175.5h0.3v0.3h-0.3zM565.2 177.7h0.4v0.4h-0.4zM566.0 176.6h0.8v0.8h-0.8zM576.3 177.4h0.5v0.5h-0.5zM569.4 178.7h0.4v0.4h-0.4zM573.8 182.6h0.8v0.8h-0.8zM563.6 175.9h0.7v0.7h-0.7zM567.8 179.3h0.5v0.5h-0.5zM571.8 177.4h0.5v0.5h-0.5zM565.3 181.0h0.9v0.9h-0.9zM565.7 183.8h0.6v0.6h-0.6zM567.8 177.3h0.6v0.6h-0.6zM571.6 172.8h0.7v0.7h-0.7zM568.8 177.9h0.3v0.3h-0.3zM573.7 182.9h0.3v0.3h-0.3zM569.5 179.0h0.4v0.4h-0.4zM572.5 183.8h0.3v0.3h-0.3z" fill="#000" opacity="0.6"/>
<path d="M558.2 87.0h2.200M559.3 85.9v2.200" stroke="#24244e" stroke-width=".8"/>
<path d="M578.0 87.0h2.200M579.1 85.9v2.200" stroke="#24244e" stroke-width=".8"/>
<path d="M498.8 106.7h2.200M499.9 105.6v2.200" stroke="#24244e" stroke-width=".8"/>
<path d="M518.6 106.7h2.200M519.7 105.6v2.200" stroke="#24244e" stroke-width=".8"/>
<path d="M538.4 106.7h2.200M539.5 105.6v2.200" stroke="#24244e" stroke-width=".8"/>
<path d="M558.2 106.7h2.200M559.3 105.6v2.200" stroke="#24244e" stroke-width=".8"/>
<path d="M578.0 106.7h2.200M579.1 105.6v2.200" stroke="#24244e" stroke-width=".8"/>
<path d="M498.8 126.5h2.200M499.9 125.4v2.200" stroke="#111" stroke-width=".8"/>
<path d="M518.6 126.5h2.200M519.7 125.4v2.200" stroke="#111" stroke-width=".8"/>
<path d="M538.4 126.5h2.200M539.5 125.4v2.200" stroke="#a02020" stroke-width=".8"/>
<path d="M558.2 126.5h2.200M559.3 125.4v2.200" stroke="#111" stroke-width=".8"/>
<path d="M578.0 126.5h2.200M579.1 125.4v2.200" stroke="#a02020" stroke-width=".8"/>
<path d="M498.8 146.2h2.200M499.9 145.1v2.200" stroke="#111" stroke-width=".8"/>
<path d="M518.6 146.2h2.200M519.7 145.1v2.200" stroke="#a02020" stroke-width=".8"/>
<path d="M538.4 146.2h2.200M539.5 145.1v2.200" stroke="#111" stroke-width=".8"/>
<path d="M558.2 146.2h2.200M559.3 145.1v2.200" stroke="#111" stroke-width=".8"/>
<path d="M578.0 146.2h2.200M579.1 145.1v2.200" stroke="#111" stroke-width=".8"/>
<path d="M498.8 165.9h2.200M499.9 164.8v2.200" stroke="#111" stroke-width=".8"/>
<path d="M518.6 165.9h2.200M519.7 164.8v2.200" stroke="#111" stroke-width=".8"/>
<path d="M538.4 165.9h2.200M539.5 164.8v2.200" stroke="#111" stroke-width=".8"/>
<path d="M558.2 165.9h2.200M559.3 164.8v2.200" stroke="#111" stroke-width=".8"/>
<path d="M578.0 165.9h2.200M579.1 164.8v2.200" stroke="#111" stroke-width=".8"/>
<path d="M498.8 185.7h2.200M499.9 184.6v2.200" stroke="#111" stroke-width=".8"/>
<path d="M518.6 185.7h2.200M519.7 184.6v2.200" stroke="#111" stroke-width=".8"/>
<path d="M538.4 185.7h2.200M539.5 184.6v2.200" stroke="#111" stroke-width=".8"/>
<path d="M558.2 185.7h2.200M559.3 184.6v2.200" stroke="#111" stroke-width=".8"/>
<path d="M578.0 185.7h2.200M579.1 184.6v2.200" stroke="#111" stroke-width=".8"/>
</g>
<rect x="480" y="187.200" width="118.500" height="39.600" fill="#3b3b3b"/>
<rect x="480" y="189.300" width="117.500" height="10.700" fill="#242424"/>
<path d="M589.300 193.600l2.200 2.300 2.200-2.300" fill="none" stroke="#eee" stroke-width="1.100"/>
<rect x="480.400" y="201.900" width="116.800" height="9.400" fill="#303030" stroke="#707070" stroke-width=".8"/>
<rect x="480.800" y="202.300" width="6" height="8.600" fill="#5a5a5a"/>
<path d="M592.300 205.300l1.600-2 1.600 2zM592.300 207.500l1.600 2 1.600-2z" fill="#e0e0e0"/>
<path d="M486.500 216.500h4.500M486.500 218.800h3M486.500 221.200h7" stroke="#d2d2d2" stroke-width="1"/><path d="M494.300 215.300l1.300 1.200-4 4.200-1.600.4.400-1.600z" fill="#d2d2d2"/>
<path d="M506.300 216.500h4l2 2v5h-6z" fill="none" stroke="#d2d2d2" stroke-width=".9"/><path d="M507.500 214v3M506 215.500h3" stroke="#d2d2d2" stroke-width=".8"/>
<rect x="524.500" y="216.500" width="5" height="3.800" fill="none" stroke="#8c8c8c" stroke-width=".9"/><rect x="527" y="218.800" width="5" height="3.800" fill="#3b3b3b" stroke="#8c8c8c" stroke-width=".9"/>
<rect x="544" y="214.800" width="8" height="8" rx=".8" fill="#dcdcdc"/><path d="M546 216.800l4 4M550 216.800l-4 4" stroke="#3b3b3b" stroke-width="1.300"/>
<path d="M569.800 217a3.200 3.200 0 1 0 .6 3" fill="none" stroke="#d2d2d2" stroke-width="1.400"/><path d="M571.500 214.800v3.300h-3.300z" fill="#d2d2d2"/>
<path d="M584 219.500c0-3 1.500-4.500 3.500-4.500s3.500 1.500 3.500 4.500zM583.500 220h8.500l-.8 3.300h-6.900z" fill="#d2d2d2"/><path d="M586 221.300h3.500" stroke="#3b3b3b" stroke-width=".8"/>
<g fill="#9a9a9a"><circle cx="535" cy="227.800" r=".9"/><circle cx="538.800" cy="227.800" r=".9"/><circle cx="542.600" cy="227.800" r=".9"/></g>
<g fill="#9a9a9a"><circle cx="478" cy="236.300" r=".7"/><circle cx="478" cy="240" r=".7"/><circle cx="478" cy="243.700" r=".7"/></g>
<rect x="480" y="230" width="11.300" height="11" fill="#3a3a3a"/><rect x="491.300" y="230" width="22" height="10.800" fill="#202020"/>
<path d="M482 232.500h7M482 235.200h7M482 237.900h7" stroke="#e2e2e2" stroke-width="1.500"/>
<rect x="493" y="231.500" width="7.500" height="7.500" fill="none" stroke="#d8d8d8" stroke-width=".9"/><path d="M495.500 232v6.500M498 232v6.500" stroke="#d8d8d8" stroke-width=".8"/>
<path d="M504.500 233h8M505 238.500c0-3 1.500-4.500 3.500-4.500s3.500 1.500 3.500 4.500" fill="none" stroke="#d8d8d8" stroke-width="1.100"/>
<rect x="590.800" y="233.400" width="5" height="4.800" fill="none" stroke="#cfcfcf" stroke-width=".9"/><path d="M594.500 234.400l-2.400 1.400 2.400 1.400z" fill="#cfcfcf"/>
<rect x="480.500" y="243.800" width="89.700" height="14.200" rx="1.500" fill="#2a2a2a"/><rect x="573" y="243.800" width="23.800" height="14.200" rx="1.500" fill="#2a2a2a"/>
<path d="M560.300 249l3.800 3.600 3.800-3.600M587.200 249l3.500 3.400 3.500-3.400" fill="none" stroke="#eee" stroke-width="1.100"/>
<path d="M576.500 252.500a3 3 0 1 0-.5-3.200" fill="none" stroke="#d8d8d8" stroke-width="1"/><path d="M575 247.500l.8 2.800 2.200-1.500z" fill="#d8d8d8"/>
<rect x="480.400" y="259.300" width="116.800" height="9.200" fill="#5c5c5c" stroke="#6e6e6e" stroke-width=".8"/>
<rect x="590.500" y="259.700" width="6.500" height="8.400" fill="#2a2a2a"/>
<path d="M592.200 263l1.600-2 1.600 2zM592.200 265l1.600 2 1.600-2z" fill="#d0d0d0"/>
<rect x="480" y="269" width="117.500" height="16" fill="#3b3b3b"/>
<path d="M507.800 273.300l1 .8-4.500 6-2.200 1.300.9-2.300z" fill="#d8d8d8"/>
<path d="M518.800 273v7.500M515 276.800h7.500" stroke="#9c9c9c" stroke-width="1"/><path d="M518.800 272l1.300 1.600h-2.600zM518.800 281.500l1.300-1.600h-2.600zM514 276.800l1.600-1.300v2.600zM523.500 276.800l-1.600-1.300v2.600z" fill="#9c9c9c"/>
<rect x="529.0" y="272.8" width="2" height="2" fill="#e0e0e0"/><rect x="529.0" y="274.8" width="2" height="2" fill="#888"/><rect x="529.0" y="276.8" width="2" height="2" fill="#e0e0e0"/><rect x="529.0" y="278.8" width="2" height="2" fill="#888"/><rect x="531.0" y="272.8" width="2" height="2" fill="#888"/><rect x="531.0" y="274.8" width="2" height="2" fill="#e0e0e0"/><rect x="531.0" y="276.8" width="2" height="2" fill="#888"/><rect x="531.0" y="278.8" width="2" height="2" fill="#e0e0e0"/><rect x="533.0" y="272.8" width="2" height="2" fill="#e0e0e0"/><rect x="533.0" y="274.8" width="2" height="2" fill="#888"/><rect x="533.0" y="276.8" width="2" height="2" fill="#e0e0e0"/><rect x="533.0" y="278.8" width="2" height="2" fill="#888"/><rect x="535.0" y="272.8" width="2" height="2" fill="#888"/><rect x="535.0" y="274.8" width="2" height="2" fill="#e0e0e0"/><rect x="535.0" y="276.8" width="2" height="2" fill="#888"/><rect x="535.0" y="278.8" width="2" height="2" fill="#e0e0e0"/>
<rect x="480" y="283.500" width="117.500" height="149" fill="#313131"/>
<rect x="480" y="284.700" width="117.500" height="16" fill="#1d1d1d"/>
<rect x="525.600" y="286" width="21.700" height="14.200" fill="#fff"/>
<path d="M484.300 293.300c1.500-2.300 3.300-3.500 5.500-3.500s4 1.200 5.500 3.500c-1.500 2.300-3.300 3.500-5.500 3.500s-4-1.200-5.500-3.500z" fill="none" stroke="#ededed" stroke-width="1"/><circle cx="489.800" cy="293.300" r="1.700" fill="#ededed"/>
<rect x="480" y="432.500" width="119" height="15.500" fill="#3a3a3a"/>
<path d="M484.500 438h3.200l1.800 1.800v5h-5z" fill="none" stroke="#d4d4d4" stroke-width=".9"/><path d="M485.300 436v2.600M484 437.300h2.600" stroke="#d4d4d4" stroke-width=".7"/>
<path d="M499 438.300h2.500l.8.800h3.700v5.700h-7z" fill="#d4d4d4"/><path d="M500.300 436.300v2.500M499 437.500h2.600" stroke="#d4d4d4" stroke-width=".7"/>
<path d="M514 442.500l3.200-3 3.200 3" fill="none" stroke="#d4d4d4" stroke-width="1.200"/>
<path d="M528.800 439.800l3.200 3 3.200-3" fill="none" stroke="#d4d4d4" stroke-width="1.200"/>
<rect x="543.500" y="437.800" width="4.500" height="4" fill="none" stroke="#d4d4d4" stroke-width=".9"/><rect x="546" y="440.300" width="4.500" height="4" fill="#3a3a3a" stroke="#d4d4d4" stroke-width=".9"/>
<path d="M558.500 439.500h2.500M558.500 442.500h2.500M563.500 437v7.500" stroke="#d4d4d4" stroke-width="1.200"/><path d="M562 443.500l1.500 1.800 1.500-1.800z" fill="#d4d4d4"/>
<rect x="574.500" y="437" width="4" height="3.500" fill="none" stroke="#d4d4d4" stroke-width=".9"/><path d="M572.500 442.500h7.500l-1.500 2.500h-6z" fill="#d4d4d4"/>
<rect x="586.700" y="437" width="7.500" height="8" rx=".7" fill="#dcdcdc"/><path d="M588.500 439l4 4M592.500 439l-4 4" stroke="#3a3a3a" stroke-width="1.300"/>
</svg>
<div class="t" style="left:486.00px;top:46.80px;font-size:6.4px;color:#6c6c6c;transform:scaleX(1.0234);transform-origin:0 50%;font-style:italic">タグで検索</div>
<div class="t" style="left:481.30px;top:58.70px;font-size:7.2px;color:#e2e2e2;transform:scaleX(1.0356);transform-origin:0 50%;font-style:italic">2. Hardness 050 (51 × 51)</div>
<div class="t" style="left:484.00px;top:189.80px;font-size:7px;color:#d4d4d4;transform:scaleX(1.0492);transform-origin:0 50%;">Basic,</div>
<div class="t" style="left:482.00px;top:201.70px;font-size:6.4px;color:#f0f0f0;transform:scaleX(1.0641);transform-origin:0 50%;">間隔</div>
<div class="t" style="left:575.38px;top:201.80px;font-size:7px;color:#e0e0e0;transform:scaleX(0.9541);transform-origin:100% 50%;">10.0</div>
<div class="t" style="left:485.30px;top:246.00px;font-size:6.4px;color:#dcdcdc;transform:scaleX(0.9754);transform-origin:0 50%;">モード</div>
<div class="t" style="left:543.00px;top:245.70px;font-size:6.4px;color:#dcdcdc;transform:scaleX(0.9623);transform-origin:0 50%;">標準</div>
<div class="t" style="left:482.00px;top:258.70px;font-size:6.4px;color:#f0f0f0;transform:scaleX(1.0445);transform-origin:0 50%;">不透明度</div>
<div class="t" style="left:571.47px;top:259.50px;font-size:7px;color:#d8d8d8;transform:scaleX(1.0267);transform-origin:100% 50%;">100.0</div>
<div class="t" style="left:481.00px;top:271.80px;font-size:7px;color:#dcdcdc;transform:scaleX(0.9841);transform-origin:0 50%;">保護:</div>
<div class="t" style="left:548.70px;top:288.30px;font-size:7px;color:#f0f0f0;transform:scaleX(0.9286);transform-origin:0 50%;">背景</div>
<div class="t" style="left:507.30px;top:34.60px;font-size:6px;color:#1a1a1a;transform:scaleX(0.8473);transform-origin:0 50%;font-weight:bold">Aa</div>
<div class="a" style="left:0;top:18px;width:1px;height:432px;background:#7a8691"></div>
<div class="a" style="left:1px;top:18px;width:1px;height:432px;background:#363e48"></div>
<div class="a" style="left:2px;top:19px;width:1px;height:431px;background:#40454a;opacity:.7"></div>
<div class="a" style="left:599px;top:18px;width:1px;height:432px;background:#7a8494"></div>
<div class="a" style="left:597.500px;top:18px;width:1.500px;height:432px;background:#2c313a"></div>
<div class="a" style="left:0;top:448px;width:600px;height:1px;background:#3d4142"></div>
<div class="a" style="left:0;top:449px;width:600px;height:1px;background:#2b2f34"></div>
</div>
</body>
</html>
